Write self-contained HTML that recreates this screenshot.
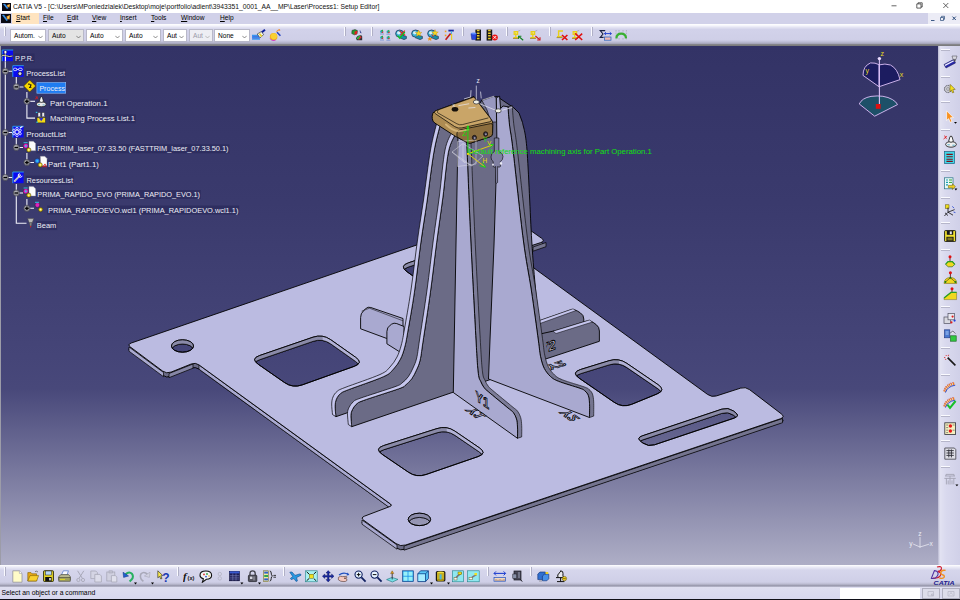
<!DOCTYPE html>
<html lang="en"><head><meta charset="utf-8"><title>CATIA V5 - Setup Editor</title>
<style>
html,body{margin:0;padding:0;}
body{width:960px;height:600px;overflow:hidden;position:relative;background:#9c9ca8;font-family:"Liberation Sans",sans-serif;font-size:6.6px;color:#000;}
.abs{position:absolute;}
.t{position:absolute;white-space:nowrap;line-height:1;transform-origin:0 0;}
#title{position:absolute;left:0;top:0;width:960px;height:13px;background:#fff;}
#menu{position:absolute;left:0;top:13px;width:960px;height:11px;background:#d1d1e9;}
#tb{position:absolute;left:0;top:24px;width:960px;height:22px;background:linear-gradient(#ffffff 0,#f6f6fc 1.5px,#e2e2f2 3.5px,#d2d2ea 5.5px,#cfcfe7 16px,#bcbcd4 18px,#a8a8bc 19.5px,#85858a 20.5px,#7c7c7e 21.5px,#8a8a92 22px);}
#vp{position:absolute;left:1px;top:46px;width:937px;height:519px;background:linear-gradient(#333366 0,#3a3a6d 30%,#454578 60%,#48487a 66%,#aeaec6 100%);overflow:hidden;}
#rtb{position:absolute;left:938px;top:46px;width:22px;height:519px;background:linear-gradient(90deg,#b8b8d0 0,#e2e2f2 2px,#d9d9ee 8px,#d0d0e8 100%);}
#btb{position:absolute;left:0;top:565px;width:960px;height:22px;background:linear-gradient(#ffffff 0,#ececf7 2px,#d6d6ec 5px,#cfcfe7 17px,#bcbcd2 19px,#9c9cb0 20.5px,#b8b8cc 22px);}
#status{position:absolute;left:0;top:587px;width:960px;height:13px;background:linear-gradient(#dedef0 0,#d8d8ee 11px,#d8d8ee 12px,#101018 12px);}
.cb{position:absolute;top:29px;height:13px;background:#fff;box-sizing:border-box;border:0.5px solid #b8b8c8;}
.cb.g{background:#e4e4e4;}
.cb.d{background:#eeeef4;color:#9a9aa8;}
.cb .t{left:3px;top:3.2px;font-size:6.6px;}
.cb svg{position:absolute;right:2px;top:4.5px;}
.sep{position:absolute;width:1px;height:9px;background:#fafaff;box-shadow:1px 0 0 #b0b0c6;}
.hdl{position:absolute;left:941px;width:9px;height:1px;background:#fafaff;box-shadow:0 1px 0 #b6b6ca;}
.ic{position:absolute;}

</style></head>
<body>
<div id="title">
  <svg class="abs" style="left:2px;top:3px" width="9" height="8" viewBox="0 0 9 8"><rect width="9" height="8" fill="#0a0a14"/><path d="M1 1L5 6L6.5 5L3 0.8Z" fill="#3a8ee0"/><path d="M5 2L8 1L7.5 4.5L5.5 4Z" fill="#f0a030"/><path d="M6 2.2L7.3 2L7 3.6Z" fill="#ffe070"/></svg>
  <span class="t" id="ttl" style="left:13px;top:3.6px;font-size:6.74px;color:#111;">CATIA V5 - [C:\Users\MPoniedzialek\Desktop\moje\portfolio\adient\3943351_0001_AA__MP\Laser\Process1: Setup Editor]</span>
  <svg class="abs" style="left:890px;top:0" width="70" height="13" viewBox="0 0 70 13"><path d="M1.5 5.8H6.5" stroke="#222" stroke-width="0.7" fill="none"/><path d="M26.8 3.9H31v4.2h-4.2zM28 3.9V2.8H32.2V7H31" stroke="#222" stroke-width="0.7" fill="none"/><path d="M53.3 3L58.3 8M58.3 3L53.3 8" stroke="#222" stroke-width="0.7" fill="none"/></svg>
</div>
<div id="menu">
  <svg class="abs" style="left:1px;top:1px" width="10" height="9" viewBox="0 0 10 9"><rect width="10" height="9" fill="#0a0a14"/><path d="M1 1L5.5 7L7 6L3 0.8Z" fill="#3a8ee0"/><path d="M5.5 2.5L9 1L8.5 5.5L6 5Z" fill="#f0a030"/><path d="M6.6 2.8L8.2 2.3L7.9 4.4Z" fill="#ffe070"/></svg>
  <div class="abs" style="left:12px;top:0;width:27px;height:11px;background:#ffe4c0;"></div>
  <span class="t m" style="left:16px;top:2.2px;"><u>S</u>tart</span>
  <span class="t m" style="left:43px;top:2.2px;"><u>F</u>ile</span>
  <span class="t m" style="left:67px;top:2.2px;"><u>E</u>dit</span>
  <span class="t m" style="left:92px;top:2.2px;"><u>V</u>iew</span>
  <span class="t m" style="left:120px;top:2.2px;"><u>I</u>nsert</span>
  <span class="t m" style="left:151px;top:2.2px;"><u>T</u>ools</span>
  <span class="t m" style="left:181px;top:2.2px;"><u>W</u>indow</span>
  <span class="t m" style="left:220px;top:2.2px;"><u>H</u>elp</span>
  <div class="abs" style="left:928px;top:0;width:32px;height:11px;background:#ececf6;"></div>
  <svg class="abs" style="left:928px;top:0" width="32" height="11" viewBox="0 0 32 11"><path d="M3 7.5H6.5" stroke="#2a4a7a" stroke-width="0.9"/><path d="M12.5 4.5h3v3h-3zM13.5 4.5V3.3h3v3H15.5" stroke="#2a4a7a" stroke-width="0.7" fill="none"/><path d="M24.5 3.6L27.8 7M27.8 3.6L24.5 7" stroke="#2a4a7a" stroke-width="1"/></svg>
</div>
<div id="tb">
  <div class="sep" style="left:4px;top:2.5px;"></div>
</div>
<div class="cb" style="left:10px;width:36px;"><span class="t">Autom.</span><svg width="5" height="4" viewBox="0 0 5 4"><path d="M0.3 0.8L2.5 3L4.7 0.8" stroke="#444" stroke-width="0.6" fill="none"/></svg></div>
<div class="cb g" style="left:48px;width:36px;"><span class="t">Auto</span><svg width="5" height="4" viewBox="0 0 5 4"><path d="M0.3 0.8L2.5 3L4.7 0.8" stroke="#444" stroke-width="0.6" fill="none"/></svg></div>
<div class="cb" style="left:86px;width:37px;"><span class="t">Auto</span><svg width="5" height="4" viewBox="0 0 5 4"><path d="M0.3 0.8L2.5 3L4.7 0.8" stroke="#444" stroke-width="0.6" fill="none"/></svg></div>
<div class="cb" style="left:125px;width:36px;"><span class="t">Auto</span><svg width="5" height="4" viewBox="0 0 5 4"><path d="M0.3 0.8L2.5 3L4.7 0.8" stroke="#444" stroke-width="0.6" fill="none"/></svg></div>
<div class="cb" style="left:163px;width:24px;"><span class="t">Aut</span><svg width="5" height="4" viewBox="0 0 5 4"><path d="M0.3 0.8L2.5 3L4.7 0.8" stroke="#444" stroke-width="0.6" fill="none"/></svg></div>
<div class="cb d" style="left:189px;width:24px;"><span class="t">Aut</span><svg width="5" height="4" viewBox="0 0 5 4"><path d="M0.3 0.8L2.5 3L4.7 0.8" stroke="#999" stroke-width="0.6" fill="none"/></svg></div>
<div class="cb" style="left:214px;width:36px;"><span class="t">None</span><svg width="5" height="4" viewBox="0 0 5 4"><path d="M0.3 0.8L2.5 3L4.7 0.8" stroke="#444" stroke-width="0.6" fill="none"/></svg></div>
<div class="sep" style="left:344px;top:26.5px;"></div>
<div class="sep" style="left:371px;top:26.5px;"></div>
<div class="sep" style="left:462px;top:26.5px;"></div>
<div class="sep" style="left:506px;top:26.5px;"></div>
<div class="sep" style="left:549px;top:26.5px;"></div>
<div class="sep" style="left:591px;top:26.5px;"></div>
<div id="vp"></div>
<div id="rtb"></div>
<div id="btb">
  <div class="sep" style="left:4px;top:2px;"></div>
  <div class="sep" style="left:177px;top:2px;"></div>
  <div class="sep" style="left:283px;top:2px;"></div>
  <div class="sep" style="left:487px;top:2px;"></div>
  <div class="sep" style="left:530px;top:2px;"></div>
</div>
<div id="status">
  <span class="t" id="stxt" style="left:1.5px;top:2.6px;font-size:6.8px;">Select an object or a command</span>
  <div class="abs" style="left:840px;top:1px;width:80px;height:11px;background:#fff;"></div>
  <div class="abs" style="left:922px;top:1px;width:18px;height:11px;background:#dcdcea;border:0.5px solid #b0b0c0;box-sizing:border-box;"></div>
  <div class="abs" style="left:942px;top:1px;width:18px;height:11px;background:#dcdcea;border:0.5px solid #b0b0c0;box-sizing:border-box;"></div>
  <svg class="abs" style="left:922px;top:1px" width="38" height="11" viewBox="0 0 38 11"><path d="M6 3.5h5.5v4.5H6zM9.5 6h1.5v1.5H9.5z" stroke="#b4b4c4" stroke-width="0.7" fill="none"/><path d="M26 3.5h6v4.5h-6zM27.5 6.5l1.5-2 1.5 2" stroke="#b4b4c4" stroke-width="0.7" fill="none"/></svg>
</div>
<svg class="abs" style="left:1px;top:46px" width="300" height="200" viewBox="1 46 300 200">
<g fill="none" stroke="#f0f0f8" stroke-width="1.1">
<path d="M5.3 60V177.5"/>
<path d="M5.3 71.3H12.5M5.3 132.5H12.5M5.3 177.5H12.5"/>
<path d="M16.3 77V87H23.5"/><path d="M26.9 92V118.1H35"/><path d="M26.9 101.3H35"/>
<path d="M16.3 138V147.5H23"/><path d="M26.9 153V162.5H34"/>
<path d="M16.3 184V223.3H26.5"/><path d="M16.3 193H23"/><path d="M26.9 199V208.3H34"/>
</g>
<circle cx="5.3" cy="71.3" r="3.1" fill="#8e8e98" stroke="#3c3c46" stroke-width="0.6"/>
<circle cx="4.8" cy="70.6" r="1.6" fill="#c4c4cc" opacity="0.6"/>
<path d="M3.5 71.3h3.6" stroke="#000" stroke-width="1.3"/>
<circle cx="16.3" cy="86.9" r="3.1" fill="#8e8e98" stroke="#3c3c46" stroke-width="0.6"/>
<circle cx="15.8" cy="86.2" r="1.6" fill="#c4c4cc" opacity="0.6"/>
<path d="M14.5 86.9h3.6" stroke="#000" stroke-width="1.3"/>
<circle cx="26.9" cy="101.3" r="3.1" fill="#8e8e98" stroke="#3c3c46" stroke-width="0.6"/>
<circle cx="26.4" cy="100.6" r="1.6" fill="#c4c4cc" opacity="0.6"/>
<path d="M25.1 101.3h3.6" stroke="#000" stroke-width="1.3"/>
<path d="M26.9 99.5v3.6" stroke="#000" stroke-width="1.3"/>
<circle cx="5.3" cy="132.5" r="3.1" fill="#8e8e98" stroke="#3c3c46" stroke-width="0.6"/>
<circle cx="4.8" cy="131.8" r="1.6" fill="#c4c4cc" opacity="0.6"/>
<path d="M3.5 132.5h3.6" stroke="#000" stroke-width="1.3"/>
<circle cx="16.3" cy="147.5" r="3.1" fill="#8e8e98" stroke="#3c3c46" stroke-width="0.6"/>
<circle cx="15.8" cy="146.8" r="1.6" fill="#c4c4cc" opacity="0.6"/>
<path d="M14.5 147.5h3.6" stroke="#000" stroke-width="1.3"/>
<circle cx="26.9" cy="162.5" r="3.1" fill="#8e8e98" stroke="#3c3c46" stroke-width="0.6"/>
<circle cx="26.4" cy="161.8" r="1.6" fill="#c4c4cc" opacity="0.6"/>
<path d="M25.1 162.5h3.6" stroke="#000" stroke-width="1.3"/>
<path d="M26.9 160.7v3.6" stroke="#000" stroke-width="1.3"/>
<circle cx="5.3" cy="177.5" r="3.1" fill="#8e8e98" stroke="#3c3c46" stroke-width="0.6"/>
<circle cx="4.8" cy="176.8" r="1.6" fill="#c4c4cc" opacity="0.6"/>
<path d="M3.5 177.5h3.6" stroke="#000" stroke-width="1.3"/>
<circle cx="16.3" cy="193.0" r="3.1" fill="#8e8e98" stroke="#3c3c46" stroke-width="0.6"/>
<circle cx="15.8" cy="192.3" r="1.6" fill="#c4c4cc" opacity="0.6"/>
<path d="M14.5 193.0h3.6" stroke="#000" stroke-width="1.3"/>
<circle cx="26.9" cy="208.3" r="3.1" fill="#8e8e98" stroke="#3c3c46" stroke-width="0.6"/>
<circle cx="26.4" cy="207.6" r="1.6" fill="#c4c4cc" opacity="0.6"/>
<path d="M25.1 208.3h3.6" stroke="#000" stroke-width="1.3"/>
<path d="M26.9 206.5v3.6" stroke="#000" stroke-width="1.3"/>
<rect x="2.0" y="50.0" width="11" height="11.2" fill="#0a0af0"/>
<path d="M2.2 61.2v-11.2h11" fill="none" stroke="#30b0f0" stroke-width="0.8"/>
<circle cx="5.4" cy="52" r="1.5" fill="#fff" stroke="#111" stroke-width="0.5"/><path d="M5.4 53.5V61" stroke="#fff" stroke-width="1.2"/><path d="M1.5 56Q4 54.5 6.5 55.8T12.5 56" fill="none" stroke="#111" stroke-width="1.8"/><path d="M1.5 56Q4 54.5 6.5 55.8T12.5 56" fill="none" stroke="#f4f4d0" stroke-width="0.9"/>
<rect x="12.6" y="65.7" width="11" height="11.2" fill="#0a0af0"/>
<path d="M12.8 76.9v-11.2h11" fill="none" stroke="#30b0f0" stroke-width="0.8"/>
<g fill="none" stroke="#fff" stroke-width="0.8"><rect x="13.6" y="68.2" width="3.2" height="2.4" rx="1"/><rect x="18.6" y="68.2" width="3.6" height="2.4" rx="1"/><path d="M16.8 69.4h1.8"/><circle cx="20" cy="73.6" r="1.9" stroke="#222" fill="#dde"/></g>
<path d="M29.7 80L35.7 86L29.7 92L23.7 86Z" fill="#f4d400" stroke="#3a3200" stroke-width="0.6"/><path d="M28 84.2a1.8 1.8 0 1 1 1 3.4M30 85h1.6M29.6 87.3h1.8" stroke="#111" stroke-width="1" fill="none"/>
<path d="M35 99.3l3-2.6M36 96.2l1.6 3" stroke="#e01818" stroke-width="0.8"/>
<ellipse cx="41.3" cy="104.3" rx="4.8" ry="2.4" fill="#e8e8e8" stroke="#111" stroke-width="0.7"/><path d="M39.2 101.5L40.5 97.2Q41.5 96.2 42.3 97.2L43.6 101.5Q41.4 103.3 39.2 101.5Z" fill="#f2f2f2" stroke="#111" stroke-width="0.7"/><path d="M38 104.6h2M42.6 104.9h2" stroke="#40a0c0" stroke-width="0.8"/>
<rect x="37" y="117.5" width="8.4" height="5.4" fill="#f0d818" stroke="#222" stroke-width="0.5"/><path d="M39 118l2.2 3.2L43.4 118Z" fill="#3030d0"/><rect x="38" y="112.6" width="2.4" height="4.2" fill="#e8e8f0" stroke="#333" stroke-width="0.4"/><rect x="42" y="112.6" width="2.4" height="4.2" fill="#e8e8f0" stroke="#333" stroke-width="0.4"/><rect x="35.8" y="111.8" width="1.6" height="1.2" fill="#30c0e0"/><rect x="36.3" y="121.6" width="1.6" height="1.2" fill="#30c0e0"/>
<rect x="12.6" y="126.3" width="11" height="11.2" fill="#0a0af0"/>
<path d="M12.8 137.5v-11.2h11" fill="none" stroke="#30b0f0" stroke-width="0.8"/>
<g fill="none" stroke="#fff" stroke-width="0.8"><circle cx="17" cy="132" r="2"/><circle cx="17" cy="128.6" r="1.2"/><circle cx="17" cy="135.4" r="1.2"/><circle cx="13.9" cy="130.3" r="1.2"/><circle cx="20.1" cy="130.3" r="1.2"/><circle cx="13.9" cy="133.7" r="1.2"/><circle cx="20.1" cy="133.7" r="1.2"/><path d="M20 128l2.5-1.6" stroke-width="1.2"/></g>
<path d="M29.0 141.3h4.4l2.2 2.2v7.2h-6.6z" fill="#fbfbfb" stroke="#8a8a9a" stroke-width="0.4"/>
<circle cx="25.8" cy="145.9" r="2.6" fill="#e020c0" stroke="#202030" stroke-width="0.5"/><circle cx="25.8" cy="145.9" r="1" fill="#30d0f0"/>
<path d="M23.6 142.7h4" stroke="#30d0f0" stroke-width="0.9"/>
<circle cx="28.8" cy="149.9" r="2.1" fill="#e8d020" stroke="#403800" stroke-width="0.5"/><circle cx="28.8" cy="149.9" r="0.8" fill="#fff8c0"/>
<path d="M40.4 156.3h4.4l2.2 2.2v7.2h-6.6z" fill="#fbfbfb" stroke="#8a8a9a" stroke-width="0.4"/>
<circle cx="37.2" cy="160.9" r="2.6" fill="#2a7af0" stroke="#202030" stroke-width="0.5"/><circle cx="37.2" cy="160.9" r="1" fill="#30d0f0"/>
<circle cx="40.2" cy="164.9" r="2.1" fill="#e8d020" stroke="#403800" stroke-width="0.5"/><circle cx="40.2" cy="164.9" r="0.8" fill="#fff8c0"/>
<path d="M42.6 167.3l2.4-3.4l1.6 3.4M42.8 166.3l3 0.6" stroke="#e01818" stroke-width="0.8" fill="none"/>
<path d="M29.0 186.6h4.4l2.2 2.2v7.2h-6.6z" fill="#fbfbfb" stroke="#8a8a9a" stroke-width="0.4"/>
<circle cx="25.8" cy="191.2" r="2.6" fill="#e020c0" stroke="#202030" stroke-width="0.5"/><circle cx="25.8" cy="191.2" r="1" fill="#30d0f0"/>
<path d="M23.6 188.0h4" stroke="#30d0f0" stroke-width="0.9"/>
<circle cx="28.8" cy="195.2" r="2.1" fill="#e8d020" stroke="#403800" stroke-width="0.5"/><circle cx="28.8" cy="195.2" r="0.8" fill="#fff8c0"/>
<rect x="12.6" y="172.0" width="11" height="11.2" fill="#0a0af0"/>
<path d="M12.8 183.2v-11.2h11" fill="none" stroke="#30b0f0" stroke-width="0.8"/>
<path d="M14.2 181.6L20.6 174.6" stroke="#fff" stroke-width="1.6"/><path d="M14.2 181.6L20.6 174.6" stroke="#222" stroke-width="0.5"/><path d="M19.6 173.4a2 2 0 1 0 2.6 2.4" fill="none" stroke="#fff" stroke-width="1"/>
<circle cx="37.4" cy="205" r="2.4" fill="#e020c0" stroke="#202030" stroke-width="0.5"/><path d="M35 202.3h4" stroke="#30d0f0" stroke-width="0.9"/><circle cx="40.6" cy="209.6" r="2.1" fill="#e8d020" stroke="#403800" stroke-width="0.5"/><circle cx="40.6" cy="209.6" r="0.8" fill="#fff8c0"/>
<path d="M27.6 218.6h6.2l-1.6 4.2h-3z" fill="#b8b8b8" stroke="#444" stroke-width="0.5"/><path d="M29.4 222.8h2.6l-0.6 3.2h-1.4z" fill="#8a8a8a" stroke="#444" stroke-width="0.4"/><path d="M30 226h1.4l-0.7 2z" fill="#e02020"/>
<rect x="14.2" y="53.6" width="20.4" height="9" fill="#2b2b5c" opacity="0.75"/>
<text x="15.00" y="60.70" font-family="Liberation Sans, sans-serif" font-size="7.6" fill="#eeeef6" textLength="18.8" lengthAdjust="spacingAndGlyphs">P.P.R.</text>
<rect x="25.4" y="68.7" width="40.4" height="9" fill="#2b2b5c" opacity="0.75"/>
<text x="26.25" y="75.80" font-family="Liberation Sans, sans-serif" font-size="7.6" fill="#eeeef6" textLength="38.8" lengthAdjust="spacingAndGlyphs">ProcessList</text>
<rect x="36.9" y="82.6" width="28.8" height="10.6" fill="#1f7cf2" stroke="#8cc0ff" stroke-width="0.6"/>
<text x="39.40" y="90.70" font-family="Liberation Sans, sans-serif" font-size="7.6" fill="#eeeef6" textLength="25.6" lengthAdjust="spacingAndGlyphs">Process</text>
<rect x="49.2" y="99.3" width="59.1" height="9" fill="#2b2b5c" opacity="0.75"/>
<text x="50.00" y="106.45" font-family="Liberation Sans, sans-serif" font-size="7.6" fill="#eeeef6" textLength="57.5" lengthAdjust="spacingAndGlyphs">Part Operation.1</text>
<rect x="49.2" y="114.3" width="86.6" height="9" fill="#2b2b5c" opacity="0.75"/>
<text x="50.00" y="121.45" font-family="Liberation Sans, sans-serif" font-size="7.6" fill="#eeeef6" textLength="85.0" lengthAdjust="spacingAndGlyphs">Machining Process List.1</text>
<rect x="25.4" y="130.0" width="41.4" height="9" fill="#2b2b5c" opacity="0.75"/>
<text x="26.25" y="137.10" font-family="Liberation Sans, sans-serif" font-size="7.6" fill="#eeeef6" textLength="39.8" lengthAdjust="spacingAndGlyphs">ProductList</text>
<rect x="36.5" y="144.3" width="192.9" height="9" fill="#2b2b5c" opacity="0.75"/>
<text x="37.25" y="151.45" font-family="Liberation Sans, sans-serif" font-size="7.6" fill="#eeeef6" textLength="191.3" lengthAdjust="spacingAndGlyphs">FASTTRIM_laser_07.33.50 (FASTTRIM_laser_07.33.50.1)</text>
<rect x="47.2" y="160.3" width="52.4" height="9" fill="#2b2b5c" opacity="0.75"/>
<text x="48.00" y="167.45" font-family="Liberation Sans, sans-serif" font-size="7.6" fill="#eeeef6" textLength="50.8" lengthAdjust="spacingAndGlyphs">Part1 (Part1.1)</text>
<rect x="25.7" y="175.6" width="48.1" height="9" fill="#2b2b5c" opacity="0.75"/>
<text x="26.50" y="182.70" font-family="Liberation Sans, sans-serif" font-size="7.6" fill="#eeeef6" textLength="46.5" lengthAdjust="spacingAndGlyphs">ResourcesList</text>
<rect x="36.5" y="190.0" width="164.3" height="9" fill="#2b2b5c" opacity="0.75"/>
<text x="37.25" y="197.10" font-family="Liberation Sans, sans-serif" font-size="7.6" fill="#eeeef6" textLength="162.8" lengthAdjust="spacingAndGlyphs">PRIMA_RAPIDO_EVO (PRIMA_RAPIDO_EVO.1)</text>
<rect x="47.2" y="205.5" width="192.0" height="9" fill="#2b2b5c" opacity="0.75"/>
<text x="48.00" y="212.60" font-family="Liberation Sans, sans-serif" font-size="7.6" fill="#eeeef6" textLength="190.4" lengthAdjust="spacingAndGlyphs">PRIMA_RAPIDOEVO.wcl1 (PRIMA_RAPIDOEVO.wcl1.1)</text>
<rect x="36.0" y="221.1" width="21.1" height="9" fill="#2b2b5c" opacity="0.75"/>
<text x="36.75" y="228.20" font-family="Liberation Sans, sans-serif" font-size="7.6" fill="#eeeef6" textLength="19.5" lengthAdjust="spacingAndGlyphs">Beam</text>
</svg><svg class="abs" style="left:1px;top:46px" width="937" height="519" viewBox="1 46 937 519">
<path d="M130.6 351.4Q127.0 348.7 131.3 347.2L503.2 219.5Q507.0 218.2 510.3 220.5L541.4 242.3Q545.5 245.2 540.7 246.8L514.9 255.3Q512.0 256.2 514.4 258.0L707.7 398.7Q711.7 401.6 716.5 400.1L740.7 392.3Q745.5 390.8 749.5 393.8L781.1 417.9Q785.5 421.2 780.3 423.0L405.7 549.2Q400.5 551.0 396.0 547.8L363.9 524.6Q360.2 522.0 364.4 520.4L390.2 510.6Q392.5 509.7 390.5 508.2L199.0 369.1Q195.4 366.5 191.2 368.2L171.1 376.3Q166.5 378.2 162.5 375.2ZM258.4 368.6Q250.2 362.9 259.7 359.7L313.0 341.4Q322.5 338.2 330.7 343.9L355.5 361.4Q363.7 367.1 354.3 370.5L302.2 389.1Q292.8 392.5 284.6 386.8ZM382.3 458.6Q374.1 452.9 383.6 449.8L437.0 432.8Q446.5 429.7 454.8 435.3L479.2 451.9Q487.5 457.5 478.0 460.8L426.0 478.7Q416.5 482.0 408.3 476.3ZM579.2 382.4Q571.0 376.7 580.6 373.7L609.1 364.9Q618.7 361.9 626.9 367.6L658.0 388.8Q666.2 394.5 656.9 398.2L631.7 408.5Q622.4 412.2 614.2 406.5ZM407.1 276.0Q399.0 270.2 408.5 267.0L461.5 249.4Q471.0 246.2 479.2 251.9L504.8 269.5Q513.0 275.2 503.6 278.5L450.4 296.9Q441.0 300.2 432.9 294.4ZM641.3 446.0Q636.0 442.2 642.2 440.1L721.8 413.4Q728.0 411.3 733.3 415.1L735.0 416.4Q740.3 420.2 734.1 422.3L654.5 449.0Q648.3 451.1 643.0 447.3ZM171.5 350.2a11.0 6.2 0 1 0 22.0 0a11.0 6.2 0 1 0 -22.0 0ZM408.2 523.6a11.2 6.2 0 1 0 22.4 0a11.2 6.2 0 1 0 -22.4 0Z" fill="#6b6b86" fill-rule="evenodd" stroke="#000" stroke-width="0.9" stroke-linejoin="round"/>
<path d="M129.0 347.0L163.5 372.5L163.5 376.7L129.0 351.2Z" fill="#a9a9d0" stroke="#000" stroke-width="0.7" stroke-linejoin="round" />
<path d="M199.0 365.0L391.0 504.5L391.0 508.7L199.0 369.2Z" fill="#a9a9d0" stroke="#000" stroke-width="0.7" stroke-linejoin="round" />
<path d="M362.0 520.0L397.0 545.0L397.0 549.2L362.0 524.2Z" fill="#a9a9d0" stroke="#000" stroke-width="0.7" stroke-linejoin="round" />
<path d="M169.0 373.5L193.0 364.0L193.0 368.2L169.0 377.7Z" fill="#8686a6" stroke="#000" stroke-width="0.7" stroke-linejoin="round" />
<path d="M404.0 546.0L782.5 418.5L782.5 422.7L404.0 550.2Z" fill="#74748f" stroke="#000" stroke-width="0.7" stroke-linejoin="round" />
<path d="M546.0 242.5L533.0 247.0L533.0 251.2L546.0 246.7Z" fill="#74748f" stroke="#000" stroke-width="0.7" stroke-linejoin="round" />
<defs>
<mask id="mk0" maskUnits="userSpaceOnUse" x="0" y="0" width="960" height="600"><path d="M258.4 364.4Q250.2 358.7 259.7 355.5L313.0 337.2Q322.5 334.0 330.7 339.7L355.5 357.2Q363.7 362.9 354.3 366.3L302.2 384.9Q292.8 388.3 284.6 382.6Z" fill="#fff"/><path d="M258.4 368.6Q250.2 362.9 259.7 359.7L313.0 341.4Q322.5 338.2 330.7 343.9L355.5 361.4Q363.7 367.1 354.3 370.5L302.2 389.1Q292.8 392.5 284.6 386.8Z" fill="#000"/></mask>
<clipPath id="cc0"><path d="M258.4 364.4Q250.2 358.7 259.7 355.5L313.0 337.2Q322.5 334.0 330.7 339.7L355.5 357.2Q363.7 362.9 354.3 366.3L302.2 384.9Q292.8 388.3 284.6 382.6Z"/></clipPath>
<mask id="mk1" maskUnits="userSpaceOnUse" x="0" y="0" width="960" height="600"><path d="M382.3 454.4Q374.1 448.7 383.6 445.6L437.0 428.6Q446.5 425.5 454.8 431.1L479.2 447.7Q487.5 453.3 478.0 456.6L426.0 474.5Q416.5 477.8 408.3 472.1Z" fill="#fff"/><path d="M382.3 458.6Q374.1 452.9 383.6 449.8L437.0 432.8Q446.5 429.7 454.8 435.3L479.2 451.9Q487.5 457.5 478.0 460.8L426.0 478.7Q416.5 482.0 408.3 476.3Z" fill="#000"/></mask>
<clipPath id="cc1"><path d="M382.3 454.4Q374.1 448.7 383.6 445.6L437.0 428.6Q446.5 425.5 454.8 431.1L479.2 447.7Q487.5 453.3 478.0 456.6L426.0 474.5Q416.5 477.8 408.3 472.1Z"/></clipPath>
<mask id="mk2" maskUnits="userSpaceOnUse" x="0" y="0" width="960" height="600"><path d="M579.2 378.2Q571.0 372.5 580.6 369.5L609.1 360.7Q618.7 357.7 626.9 363.4L658.0 384.6Q666.2 390.3 656.9 394.0L631.7 404.3Q622.4 408.0 614.2 402.3Z" fill="#fff"/><path d="M579.2 382.4Q571.0 376.7 580.6 373.7L609.1 364.9Q618.7 361.9 626.9 367.6L658.0 388.8Q666.2 394.5 656.9 398.2L631.7 408.5Q622.4 412.2 614.2 406.5Z" fill="#000"/></mask>
<clipPath id="cc2"><path d="M579.2 378.2Q571.0 372.5 580.6 369.5L609.1 360.7Q618.7 357.7 626.9 363.4L658.0 384.6Q666.2 390.3 656.9 394.0L631.7 404.3Q622.4 408.0 614.2 402.3Z"/></clipPath>
<mask id="mk3" maskUnits="userSpaceOnUse" x="0" y="0" width="960" height="600"><path d="M407.1 271.8Q399.0 266.0 408.5 262.8L461.5 245.2Q471.0 242.0 479.2 247.7L504.8 265.3Q513.0 271.0 503.6 274.3L450.4 292.7Q441.0 296.0 432.9 290.2Z" fill="#fff"/><path d="M407.1 276.0Q399.0 270.2 408.5 267.0L461.5 249.4Q471.0 246.2 479.2 251.9L504.8 269.5Q513.0 275.2 503.6 278.5L450.4 296.9Q441.0 300.2 432.9 294.4Z" fill="#000"/></mask>
<clipPath id="cc3"><path d="M407.1 271.8Q399.0 266.0 408.5 262.8L461.5 245.2Q471.0 242.0 479.2 247.7L504.8 265.3Q513.0 271.0 503.6 274.3L450.4 292.7Q441.0 296.0 432.9 290.2Z"/></clipPath>
<mask id="mk4" maskUnits="userSpaceOnUse" x="0" y="0" width="960" height="600"><path d="M641.3 441.8Q636.0 438.0 642.2 435.9L721.8 409.2Q728.0 407.1 733.3 410.9L735.0 412.2Q740.3 416.0 734.1 418.1L654.5 444.8Q648.3 446.9 643.0 443.1Z" fill="#fff"/><path d="M641.3 446.0Q636.0 442.2 642.2 440.1L721.8 413.4Q728.0 411.3 733.3 415.1L735.0 416.4Q740.3 420.2 734.1 422.3L654.5 449.0Q648.3 451.1 643.0 447.3Z" fill="#000"/></mask>
<clipPath id="cc4"><path d="M641.3 441.8Q636.0 438.0 642.2 435.9L721.8 409.2Q728.0 407.1 733.3 410.9L735.0 412.2Q740.3 416.0 734.1 418.1L654.5 444.8Q648.3 446.9 643.0 443.1Z"/></clipPath>
<mask id="mk5" maskUnits="userSpaceOnUse" x="0" y="0" width="960" height="600"><path d="M171.5 346.0a11.0 6.2 0 1 0 22.0 0a11.0 6.2 0 1 0 -22.0 0Z" fill="#fff"/><path d="M171.5 350.2a11.0 6.2 0 1 0 22.0 0a11.0 6.2 0 1 0 -22.0 0Z" fill="#000"/></mask>
<clipPath id="cc5"><path d="M171.5 346.0a11.0 6.2 0 1 0 22.0 0a11.0 6.2 0 1 0 -22.0 0Z"/></clipPath>
<mask id="mk6" maskUnits="userSpaceOnUse" x="0" y="0" width="960" height="600"><path d="M408.2 519.4a11.2 6.2 0 1 0 22.4 0a11.2 6.2 0 1 0 -22.4 0Z" fill="#fff"/><path d="M408.2 523.6a11.2 6.2 0 1 0 22.4 0a11.2 6.2 0 1 0 -22.4 0Z" fill="#000"/></mask>
<clipPath id="cc6"><path d="M408.2 519.4a11.2 6.2 0 1 0 22.4 0a11.2 6.2 0 1 0 -22.4 0Z"/></clipPath>
</defs>
<path d="M130.6 347.2Q127.0 344.5 131.3 343.0L503.2 215.3Q507.0 214.0 510.3 216.3L541.4 238.1Q545.5 241.0 540.7 242.6L514.9 251.1Q512.0 252.0 514.4 253.8L707.7 394.5Q711.7 397.4 716.5 395.9L740.7 388.1Q745.5 386.6 749.5 389.6L781.1 413.7Q785.5 417.0 780.3 418.8L405.7 545.0Q400.5 546.8 396.0 543.6L363.9 520.4Q360.2 517.8 364.4 516.2L390.2 506.4Q392.5 505.5 390.5 504.0L199.0 364.9Q195.4 362.3 191.2 364.0L171.1 372.1Q166.5 374.0 162.5 371.0ZM258.4 364.4Q250.2 358.7 259.7 355.5L313.0 337.2Q322.5 334.0 330.7 339.7L355.5 357.2Q363.7 362.9 354.3 366.3L302.2 384.9Q292.8 388.3 284.6 382.6ZM382.3 454.4Q374.1 448.7 383.6 445.6L437.0 428.6Q446.5 425.5 454.8 431.1L479.2 447.7Q487.5 453.3 478.0 456.6L426.0 474.5Q416.5 477.8 408.3 472.1ZM579.2 378.2Q571.0 372.5 580.6 369.5L609.1 360.7Q618.7 357.7 626.9 363.4L658.0 384.6Q666.2 390.3 656.9 394.0L631.7 404.3Q622.4 408.0 614.2 402.3ZM407.1 271.8Q399.0 266.0 408.5 262.8L461.5 245.2Q471.0 242.0 479.2 247.7L504.8 265.3Q513.0 271.0 503.6 274.3L450.4 292.7Q441.0 296.0 432.9 290.2ZM641.3 441.8Q636.0 438.0 642.2 435.9L721.8 409.2Q728.0 407.1 733.3 410.9L735.0 412.2Q740.3 416.0 734.1 418.1L654.5 444.8Q648.3 446.9 643.0 443.1ZM171.5 346.0a11.0 6.2 0 1 0 22.0 0a11.0 6.2 0 1 0 -22.0 0ZM408.2 519.4a11.2 6.2 0 1 0 22.4 0a11.2 6.2 0 1 0 -22.4 0Z" fill="#bbbbe1" fill-rule="evenodd" stroke="#000" stroke-width="0.9" stroke-linejoin="round"/>
<g mask="url(#mk0)"><rect x="100" y="200" width="222.5" height="400" fill="#8a8aa8"/><rect x="322.5" y="200" width="800" height="400" fill="#b2b2d6"/></g>
<path d="M258.4 368.6Q250.2 362.9 259.7 359.7L313.0 341.4Q322.5 338.2 330.7 343.9L355.5 361.4Q363.7 367.1 354.3 370.5L302.2 389.1Q292.8 392.5 284.6 386.8Z" fill="none" stroke="#000" stroke-width="0.7" clip-path="url(#cc0)"/>
<g mask="url(#mk1)"><rect x="100" y="200" width="346.5" height="400" fill="#8a8aa8"/><rect x="446.5" y="200" width="800" height="400" fill="#b2b2d6"/></g>
<path d="M382.3 458.6Q374.1 452.9 383.6 449.8L437.0 432.8Q446.5 429.7 454.8 435.3L479.2 451.9Q487.5 457.5 478.0 460.8L426.0 478.7Q416.5 482.0 408.3 476.3Z" fill="none" stroke="#000" stroke-width="0.7" clip-path="url(#cc1)"/>
<g mask="url(#mk2)"><rect x="100" y="200" width="518.7" height="400" fill="#8a8aa8"/><rect x="618.7" y="200" width="800" height="400" fill="#b2b2d6"/></g>
<path d="M579.2 382.4Q571.0 376.7 580.6 373.7L609.1 364.9Q618.7 361.9 626.9 367.6L658.0 388.8Q666.2 394.5 656.9 398.2L631.7 408.5Q622.4 412.2 614.2 406.5Z" fill="none" stroke="#000" stroke-width="0.7" clip-path="url(#cc2)"/>
<g mask="url(#mk3)"><rect x="100" y="200" width="371.0" height="400" fill="#8a8aa8"/><rect x="471.0" y="200" width="800" height="400" fill="#b2b2d6"/></g>
<path d="M407.1 276.0Q399.0 270.2 408.5 267.0L461.5 249.4Q471.0 246.2 479.2 251.9L504.8 269.5Q513.0 275.2 503.6 278.5L450.4 296.9Q441.0 300.2 432.9 294.4Z" fill="none" stroke="#000" stroke-width="0.7" clip-path="url(#cc3)"/>
<g mask="url(#mk4)"><rect x="100" y="200" width="800.0" height="400" fill="#8a8aa8"/><rect x="900.0" y="200" width="800" height="400" fill="#b2b2d6"/></g>
<path d="M641.3 446.0Q636.0 442.2 642.2 440.1L721.8 413.4Q728.0 411.3 733.3 415.1L735.0 416.4Q740.3 420.2 734.1 422.3L654.5 449.0Q648.3 451.1 643.0 447.3Z" fill="none" stroke="#000" stroke-width="0.7" clip-path="url(#cc4)"/>
<g mask="url(#mk5)"><rect x="100" y="200" width="800.0" height="400" fill="#8a8aa8"/><rect x="900.0" y="200" width="800" height="400" fill="#b2b2d6"/></g>
<path d="M171.5 350.2a11.0 6.2 0 1 0 22.0 0a11.0 6.2 0 1 0 -22.0 0Z" fill="none" stroke="#000" stroke-width="0.7" clip-path="url(#cc5)"/>
<g mask="url(#mk6)"><rect x="100" y="200" width="800.0" height="400" fill="#8a8aa8"/><rect x="900.0" y="200" width="800" height="400" fill="#b2b2d6"/></g>
<path d="M408.2 523.6a11.2 6.2 0 1 0 22.4 0a11.2 6.2 0 1 0 -22.4 0Z" fill="none" stroke="#000" stroke-width="0.7" clip-path="url(#cc6)"/>
<path d="M258.4 364.4Q250.2 358.7 259.7 355.5L313.0 337.2Q322.5 334.0 330.7 339.7L355.5 357.2Q363.7 362.9 354.3 366.3L302.2 384.9Q292.8 388.3 284.6 382.6Z" fill="none" stroke="#000" stroke-width="0.9"/>
<path d="M382.3 454.4Q374.1 448.7 383.6 445.6L437.0 428.6Q446.5 425.5 454.8 431.1L479.2 447.7Q487.5 453.3 478.0 456.6L426.0 474.5Q416.5 477.8 408.3 472.1Z" fill="none" stroke="#000" stroke-width="0.9"/>
<path d="M579.2 378.2Q571.0 372.5 580.6 369.5L609.1 360.7Q618.7 357.7 626.9 363.4L658.0 384.6Q666.2 390.3 656.9 394.0L631.7 404.3Q622.4 408.0 614.2 402.3Z" fill="none" stroke="#000" stroke-width="0.9"/>
<path d="M407.1 271.8Q399.0 266.0 408.5 262.8L461.5 245.2Q471.0 242.0 479.2 247.7L504.8 265.3Q513.0 271.0 503.6 274.3L450.4 292.7Q441.0 296.0 432.9 290.2Z" fill="none" stroke="#000" stroke-width="0.9"/>
<path d="M641.3 441.8Q636.0 438.0 642.2 435.9L721.8 409.2Q728.0 407.1 733.3 410.9L735.0 412.2Q740.3 416.0 734.1 418.1L654.5 444.8Q648.3 446.9 643.0 443.1Z" fill="none" stroke="#000" stroke-width="0.9"/>
<path d="M171.5 346.0a11.0 6.2 0 1 0 22.0 0a11.0 6.2 0 1 0 -22.0 0Z" fill="none" stroke="#000" stroke-width="0.9"/>
<path d="M408.2 519.4a11.2 6.2 0 1 0 22.4 0a11.2 6.2 0 1 0 -22.4 0Z" fill="none" stroke="#000" stroke-width="0.9"/>
<path d="M360.6 328.8L360.6 317.5Q360.6 313.5 363.5 310.8L365.8 308.6Q368.0 306.5 370.8 307.5L403.0 318.5L403.0 340.0L386.3 338.3Z" fill="#a9a9d0" stroke="#000" stroke-width="0.9" stroke-linejoin="round" />
<path d="M362.0 311.0L369.5 308.2L402.5 320.6" fill="none" stroke="#000" stroke-width="0.5" stroke-linejoin="round" stroke-linecap="round"/>
<path d="M386.9 343.8L386.9 331.5Q386.9 327.5 390.2 325.2L391.5 324.2Q394.0 322.5 396.8 323.6L404.0 326.5L404.0 352.0L398.8 351.3Z" fill="#a9a9d0" stroke="#000" stroke-width="0.9" stroke-linejoin="round" />
<path d="M536.0 322.0L570.0 310.1Q573.8 308.8 577.2 310.9L580.4 312.9Q583.8 315.0 583.8 319.0L583.8 326.0L540.0 345.0Z" fill="#6b6b86" stroke="#000" stroke-width="0.9" stroke-linejoin="round" />
<path d="M538.0 321.0L573.0 308.8L576.0 310.5L540.0 323.5Z" fill="#c6c6ee" stroke="#000" stroke-width="0.5" stroke-linejoin="round" />
<path d="M540.0 334.0L556.0 330.5L586.2 321.2Q590.0 320.0 593.2 322.4L596.2 324.6Q599.4 327.0 599.4 331.0L599.4 341.3L545.0 359.2L538.0 350.0Z" fill="#6b6b86" stroke="#000" stroke-width="0.9" stroke-linejoin="round" />
<path d="M553.0 331.2L589.5 320.0L592.5 322.0L556.0 333.5Z" fill="#c6c6ee" stroke="#000" stroke-width="0.5" stroke-linejoin="round" />
<path d="M440.4 124.2C439.3 128.9 436.1 139.2 433.9 152.2C431.6 165.2 429.1 187.2 426.9 202.2C424.7 217.2 423.0 227.2 420.9 242.2C418.8 257.2 416.6 277.2 414.4 292.2C412.2 307.2 409.3 323.0 407.7 332.2C406.1 341.4 405.9 342.7 404.7 347.2C403.5 351.7 402.3 355.5 400.4 359.2C398.5 362.9 396.2 366.3 393.4 369.2C390.6 372.1 390.9 373.3 383.4 376.7C375.9 380.1 355.6 386.9 348.4 389.7C341.2 392.5 342.4 392.1 340.4 393.7C338.4 395.3 337.3 397.1 336.4 399.2C335.5 401.3 335.2 403.3 335.1 406.2C335.0 409.1 335.8 414.9 335.9 416.7L440 381L455 130Z" fill="#6b6b86" stroke="#000" stroke-width="0.9" stroke-linejoin="round"/>
<path d="M437.0 122.0C435.9 126.7 432.8 137.0 430.5 150.0C428.2 163.0 425.7 185.0 423.5 200.0C421.3 215.0 419.6 225.0 417.5 240.0C415.4 255.0 413.2 275.0 411.0 290.0C408.8 305.0 405.9 320.8 404.3 330.0C402.7 339.2 402.5 340.5 401.3 345.0C400.1 349.5 398.9 353.3 397.0 357.0C395.1 360.7 392.8 364.1 390.0 367.0C387.2 369.9 387.5 371.1 380.0 374.5C372.5 377.9 352.2 384.7 345.0 387.5C337.8 390.3 339.0 389.9 337.0 391.5C335.0 393.1 333.9 394.9 333.0 397.0C332.1 399.1 331.8 401.1 331.7 404.0C331.6 406.9 332.4 412.8 332.5 414.5L335.9 416.7C335.8 414.9 335.0 409.1 335.1 406.2C335.2 403.3 335.5 401.3 336.4 399.2C337.3 397.1 338.4 395.3 340.4 393.7C342.4 392.1 341.2 392.5 348.4 389.7C355.6 386.9 375.9 380.1 383.4 376.7C390.9 373.3 390.6 372.1 393.4 369.2C396.2 366.3 398.5 362.9 400.4 359.2C402.3 355.5 403.5 351.7 404.7 347.2C405.9 342.7 406.1 341.4 407.7 332.2C409.3 323.0 412.2 307.2 414.4 292.2C416.6 277.2 418.8 257.2 420.9 242.2C423.0 227.2 424.7 217.2 426.9 202.2C429.1 187.2 431.6 165.2 433.9 152.2C436.1 139.2 439.3 128.9 440.4 124.2Z" fill="#c6c6ee" stroke="#000" stroke-width="0.7" stroke-linejoin="round"/>
<path d="M455.4 134.2C454.2 137.2 450.5 141.7 448.4 152.2C446.3 162.7 444.8 182.2 442.9 197.2C440.9 212.2 438.8 226.4 436.7 242.2C434.6 258.0 432.7 275.5 430.4 292.2C428.1 308.9 424.6 330.9 422.9 342.2C421.2 353.5 421.2 355.5 420.1 360.2C419.0 364.9 417.8 367.1 416.4 370.2C415.0 373.3 413.5 376.4 411.7 378.9C409.9 381.4 407.6 383.5 405.4 385.2C403.2 386.9 405.4 386.3 398.4 388.9C391.4 391.4 370.4 397.9 363.4 400.5C356.4 403.1 358.2 402.7 356.4 404.2C354.6 405.7 353.3 407.8 352.4 409.7C351.5 411.6 351.0 412.7 350.9 415.5C350.8 418.3 351.6 424.8 351.7 426.7L489 380L541 362L541.0 345.0C540.7 340.8 539.9 329.2 539.0 320.0C538.1 310.8 536.8 303.3 535.6 290.0C534.4 276.7 533.1 263.3 531.7 240.0C530.3 216.7 528.5 169.6 527.0 150.0C525.5 130.4 523.2 127.1 522.5 122.5L519 113L514 108L497 96.5L482 100L470 118Z" fill="#6b6b86" stroke="#000" stroke-width="0.9" stroke-linejoin="round"/>
<path d="M452.0 132.0C450.8 135.0 447.1 139.5 445.0 150.0C442.9 160.5 441.4 180.0 439.5 195.0C437.6 210.0 435.4 224.2 433.3 240.0C431.2 255.8 429.3 273.3 427.0 290.0C424.7 306.7 421.2 328.7 419.5 340.0C417.8 351.3 417.8 353.3 416.7 358.0C415.6 362.7 414.4 364.9 413.0 368.0C411.6 371.1 410.1 374.2 408.3 376.7C406.5 379.2 404.2 381.3 402.0 383.0C399.8 384.7 402.0 384.1 395.0 386.7C388.0 389.2 367.0 395.8 360.0 398.3C353.0 400.9 354.8 400.5 353.0 402.0C351.2 403.5 349.9 405.6 349.0 407.5C348.1 409.4 347.6 410.5 347.5 413.3C347.4 416.1 348.2 422.6 348.3 424.5L351.7 426.7C351.6 424.8 350.8 418.3 350.9 415.5C351.0 412.7 351.5 411.6 352.4 409.7C353.3 407.8 354.6 405.7 356.4 404.2C358.2 402.7 356.4 403.1 363.4 400.5C370.4 397.9 391.4 391.4 398.4 388.9C405.4 386.3 403.2 386.9 405.4 385.2C407.6 383.5 409.9 381.4 411.7 378.9C413.5 376.4 415.0 373.3 416.4 370.2C417.8 367.1 419.0 364.9 420.1 360.2C421.2 355.5 421.2 353.5 422.9 342.2C424.6 330.9 428.1 308.9 430.4 292.2C432.7 275.5 434.6 258.0 436.7 242.2C438.8 226.4 440.9 212.2 442.9 197.2C444.8 182.2 446.3 162.7 448.4 152.2C450.5 141.7 454.2 137.2 455.4 134.2Z" fill="#c6c6ee" stroke="#000" stroke-width="0.7" stroke-linejoin="round"/>
<path d="M482.0 100.5L494.0 96.3L496.3 97.8L496.5 122.0L491.0 122.0L487.0 110.0Z" fill="#9898c0" stroke="#000" stroke-width="0.6" stroke-linejoin="round" />
<path d="M470.2 136.6C470.4 138.6 470.4 131.6 471.2 148.6C472.0 165.6 473.5 206.9 475.0 238.6C476.5 270.3 478.9 316.4 480.2 338.6C481.4 360.8 481.7 365.0 482.5 371.9C483.3 378.9 484.1 377.9 485.0 380.3C485.9 382.7 486.9 384.4 488.2 386.1C489.4 387.8 488.5 386.9 492.5 390.3C496.5 393.7 508.0 403.1 512.2 406.6C516.4 410.1 516.1 409.3 517.5 411.1C518.9 412.9 520.0 415.2 520.7 417.6C521.4 420.0 521.5 422.4 521.7 425.6C521.9 428.8 521.7 435.0 521.7 436.9L517.5 438.3C517.5 436.4 517.7 430.2 517.5 427.0C517.3 423.8 517.2 421.4 516.5 419.0C515.8 416.6 514.7 414.3 513.3 412.5C511.9 410.7 512.2 411.5 508.0 408.0C503.8 404.5 492.3 395.1 488.3 391.7C484.3 388.3 485.2 389.2 484.0 387.5C482.8 385.8 481.8 384.1 480.8 381.7C479.9 379.3 479.1 380.2 478.3 373.3C477.5 366.4 477.2 362.2 476.0 340.0C474.8 317.8 472.3 271.7 470.8 240.0C469.3 208.3 467.8 167.0 467.0 150.0C466.2 133.0 466.2 140.0 466.0 138.0Z" fill="#7c7c98" stroke="#000" stroke-width="0.6" stroke-linejoin="round"/>
<path d="M458 135L453.3 392.5L517.5 438.3L517.5 438.3C517.5 436.4 517.7 430.2 517.5 427.0C517.3 423.8 517.2 421.4 516.5 419.0C515.8 416.6 514.7 414.3 513.3 412.5C511.9 410.7 512.2 411.5 508.0 408.0C503.8 404.5 492.3 395.1 488.3 391.7C484.3 388.3 485.2 389.2 484.0 387.5C482.8 385.8 481.8 384.1 480.8 381.7C479.9 379.3 479.1 380.2 478.3 373.3C477.5 366.4 477.2 362.2 476.0 340.0C474.8 317.8 472.3 271.7 470.8 240.0C469.3 208.3 467.8 167.0 467.0 150.0C466.2 133.0 466.2 140.0 466.0 138.0Z" fill="#a9a9d0" stroke="#000" stroke-width="0.9" stroke-linejoin="round"/>
<path d="M512.2 105.4C512.5 108.4 512.9 116.4 513.7 123.6C514.5 130.8 514.9 129.4 517.2 148.6C519.5 167.8 524.5 215.3 527.5 238.6C530.5 261.9 533.0 271.9 535.5 288.6C538.0 305.3 541.0 327.5 542.5 338.6C544.0 349.7 543.8 350.6 544.8 355.3C545.8 360.0 546.8 363.6 548.4 366.9C550.1 370.2 552.3 372.9 554.7 375.1C557.1 377.3 557.8 377.9 562.7 379.9C567.6 381.9 579.8 385.3 584.2 386.9C588.6 388.5 587.8 388.4 589.2 389.6C590.6 390.8 591.8 392.1 592.5 394.1C593.2 396.2 593.5 398.2 593.7 401.9C593.9 405.6 593.7 413.7 593.7 416.1L589.5 417.5C589.5 415.1 589.7 407.0 589.5 403.3C589.3 399.6 589.0 397.6 588.3 395.5C587.5 393.4 586.4 392.2 585.0 391.0C583.6 389.8 584.4 389.9 580.0 388.3C575.6 386.7 563.4 383.3 558.5 381.3C553.6 379.3 552.9 378.7 550.5 376.5C548.1 374.3 545.9 371.6 544.2 368.3C542.6 365.0 541.6 361.4 540.6 356.7C539.6 352.0 539.8 351.1 538.3 340.0C536.8 328.9 533.8 306.7 531.3 290.0C528.8 273.3 526.3 263.3 523.3 240.0C520.2 216.7 515.3 169.2 513.0 150.0C510.7 130.8 510.3 132.2 509.5 125.0C508.7 117.8 508.2 109.8 508.0 106.8Z" fill="#74748f" stroke="#000" stroke-width="0.6" stroke-linejoin="round"/>
<path d="M496.3 97.8L497 150L494 245L490 340L488.5 379L589.5 417.5L589.5 417.5C589.5 415.1 589.7 407.0 589.5 403.3C589.3 399.6 589.0 397.6 588.3 395.5C587.5 393.4 586.4 392.2 585.0 391.0C583.6 389.8 584.4 389.9 580.0 388.3C575.6 386.7 563.4 383.3 558.5 381.3C553.6 379.3 552.9 378.7 550.5 376.5C548.1 374.3 545.9 371.6 544.2 368.3C542.6 365.0 541.6 361.4 540.6 356.7C539.6 352.0 539.8 351.1 538.3 340.0C536.8 328.9 533.8 306.7 531.3 290.0C528.8 273.3 526.3 263.3 523.3 240.0C520.2 216.7 515.3 169.2 513.0 150.0C510.7 130.8 510.3 132.2 509.5 125.0C508.7 117.8 508.2 109.8 508.0 106.8L503 106L500.6 108.6L499.6 96.2Z" fill="#a9a9d0" stroke="#000" stroke-width="0.9" stroke-linejoin="round"/>
<path d="M432.2 116.2Q432.0 112.2 435.7 110.8L474.0 96.5L491.6 119.9Q492.8 121.5 492.8 123.5L492.6 133.5Q492.5 136.0 490.1 136.8L470.9 143.0Q469.0 143.6 467.2 142.7L458.5 138.0Q455.8 136.6 453.3 135.0L434.9 123.1Q432.4 121.5 432.3 118.5Z" fill="#ad8b52" stroke="#000" stroke-width="0.9" stroke-linejoin="round" />
<path d="M457.3 132.2Q457.8 130.3 459.8 129.9L490.6 123.6Q492.6 123.2 492.6 125.2L492.5 133.5Q492.5 136.0 490.1 136.8L470.9 143.0Q469.0 143.6 467.2 142.6L458.8 138.0Q456.2 136.6 456.9 133.7Z" fill="#8c6e3e" stroke="#000" stroke-width="0.7" stroke-linejoin="round" />
<path d="M446 124.5Q452 130.5 458.5 131.2Q463 131 468 129.6" fill="none" stroke="#dcbc80" stroke-width="2" stroke-linecap="round" opacity="0.8"/>
<path d="M435.9 114.0Q432.6 111.8 436.4 110.5L474.0 97.0L490.8 118.8Q492.6 121.2 489.7 121.8L461.9 127.9Q458.0 128.8 454.7 126.6Z" fill="#c9a568" stroke="#000" stroke-width="0.7" stroke-linejoin="round" />
<path d="M438.0 110.5L437.5 111.5Q437.0 112.5 438.0 113.0L456.9 123.8Q459.5 125.3 462.4 124.6L488.0 118.0" fill="none" stroke="#000" stroke-width="0.6" stroke-linejoin="round" stroke-linecap="round"/>
<ellipse cx="455" cy="109.3" rx="3.3" ry="2.3" fill="#15100a"/>
<ellipse cx="474.4" cy="137.6" rx="2.1" ry="2.3" fill="#3a3140" stroke="#000" stroke-width="0.6"/>
<ellipse cx="485.6" cy="134" rx="2.1" ry="2.3" fill="#3a3140" stroke="#000" stroke-width="0.6"/>
<ellipse cx="474.7" cy="137.9" rx="0.9" ry="1" fill="#9a9ab0"/>
<ellipse cx="485.9" cy="134.3" rx="0.9" ry="1" fill="#9a9ab0"/>
<g fill="none" stroke="#e6e6f2" stroke-width="0.7" stroke-linecap="round">
<path d="M476.3 86V100.5"/><path d="M471 90.6L470.6 97L464.4 98.8"/><path d="M480.6 92L481.2 98"/>
<path d="M458.8 105.6L468.8 103.8"/><path d="M468.8 108L475 107.5"/><path d="M480 103.8L495 110"/><path d="M482.5 100L493.8 96.3"/><path d="M501 110.5L512 107.5"/>
</g>
<ellipse cx="476.3" cy="102" rx="3" ry="2" fill="#f0f0e6" stroke="#22222c" stroke-width="0.7"/>
<ellipse cx="498.2" cy="110.8" rx="3" ry="2" fill="#f0f0e6" stroke="#22222c" stroke-width="0.7"/>
<text x="476.6" y="83.2" font-family="Liberation Sans, sans-serif" font-size="6.5" fill="#e6e6f2">z</text>
<text x="452.5" y="106.6" font-family="Liberation Sans, sans-serif" font-size="5.5" fill="#e6e6f2">x</text>
<path d="M494.3 138V151.5Q491 153 491 157Q491 160.5 493.2 161.5V166.5Q494.6 168 495.6 166.5V182.5Q496.6 184 497.6 182.5V166.5Q499 168 500.4 166.5V161.5Q503 160 503 156.5Q503 153 498.9 151.5V138Z" fill="#8080a2" stroke="#000" stroke-width="0.6" stroke-linejoin="round"/>
<ellipse cx="493" cy="164.6" rx="1" ry="1.2" fill="#e8e8f4"/><ellipse cx="501" cy="163.4" rx="1.2" ry="1.3" fill="#e8e8f4"/>
<g fill="none" stroke="#dcdce8" stroke-width="0.6" opacity="0.85">
<path d="M452 152L463 143.5L483 156L472 166Z"/><path d="M457.5 141.5L476 140V164L457.5 166.5Z"/><path d="M463 143.5V161L472 166"/><path d="M452 152L465 163"/>
</g>
<g fill="none" stroke-linecap="round">
<path d="M467.9 153.8V126" stroke="#10e010" stroke-width="0.9"/><path d="M466.6 130L467.9 125.8L469.2 130" stroke="#10e010" stroke-width="0.8"/>
<path d="M467.9 153.8L492.5 145" stroke="#e8d800" stroke-width="0.9"/><path d="M488.5 144.5L493.3 144.6L490 148" stroke="#10e010" stroke-width="0.9"/>
<path d="M467.9 153.8L484.5 166.5" stroke="#e8d800" stroke-width="0.9"/><path d="M480 165.8L485.5 167.3L482.6 162.6" stroke="#10e010" stroke-width="0.9"/>
</g>
<rect x="467" y="153" width="1.8" height="1.8" fill="#e8d800"/>
<text x="462.2" y="135.6" font-family="Liberation Sans, sans-serif" font-size="7" fill="#10e010">Z</text>
<text x="483" y="141.5" font-family="Liberation Sans, sans-serif" font-size="6.5" fill="#10e010">Y</text>
<text x="487.2" y="145.2" font-family="Liberation Sans, sans-serif" font-size="6" fill="#e8d800">V</text>
<text x="482.6" y="163" font-family="Liberation Sans, sans-serif" font-size="6.5" fill="#e8d800">H</text>
<text id="gtxt" x="468.3" y="154.2" font-family="Liberation Sans, sans-serif" font-size="7.4" fill="#10e010" textLength="183.5" lengthAdjust="spacingAndGlyphs">Default reference machining axis for Part Operation.1</text>
<g stroke-linecap="round" stroke-linejoin="round" stroke="#dcc0f8" stroke-width="0.9">
<path d="M859.4 103.6Q862 98 871 96.4Q884 94.6 892.5 99.6Q896.5 102 897.5 104.6L875 116Z" fill="#1d5068"/>
<path d="M863 75Q863 66 870.6 62.9Q875 62.5 879.4 64.8V86.6Z" fill="#1c1c60"/>
<path d="M879.4 64.8Q885 63.2 890.5 65Q897.5 68.5 900 79.6L879.4 86.6Z" fill="#1c1c60"/>
<path d="M879.4 60V105" fill="none" stroke-width="1.1"/>
</g>
<circle cx="879.4" cy="58.6" r="1.7" fill="#ecdcff"/>
<rect x="875.8" y="104" width="4.8" height="4.8" fill="#e01010"/>
<text x="880.6" y="56.3" font-family="Liberation Sans, sans-serif" font-size="7" fill="#e8d820">z</text>
<text x="899.8" y="77" font-family="Liberation Sans, sans-serif" font-size="7" fill="#e8d820">x</text>
<text x="865.6" y="73" font-family="Liberation Sans, sans-serif" font-size="7" fill="#e8d820">y</text>
<g fill="none" stroke="#e8e8f2" stroke-width="0.8" stroke-linecap="round"><path d="M920 547V537.5"/><path d="M920 547L913.5 544.2"/><path d="M920 547L929 544.2"/></g>
<text x="918.2" y="536.4" font-family="Liberation Sans, sans-serif" font-size="6.6" fill="#ececf4">z</text>
<text x="909.2" y="546" font-family="Liberation Sans, sans-serif" font-size="6.6" fill="#ececf4">y</text>
<text x="929.6" y="546" font-family="Liberation Sans, sans-serif" font-size="6.6" fill="#ececf4">x</text>
<text transform="matrix(0.78 0.56 0 1 475.6 400)" font-family="Liberation Sans, sans-serif" font-weight="bold" font-size="14" fill="#a4a4cc" stroke="#000" stroke-width="0.8">Y1</text>
<text transform="matrix(0.78 0.56 0.95 -0.32 473.5 407)" font-family="Liberation Sans, sans-serif" font-weight="bold" font-size="13.5" fill="#b4b4dc" stroke="#000" stroke-width="0.8">Y1</text>
<text transform="matrix(0.78 0.56 0.95 -0.32 567.5 409.5)" font-family="Liberation Sans, sans-serif" font-weight="bold" font-size="13.5" fill="#b4b4dc" stroke="#000" stroke-width="0.8">Y2</text>
<clipPath id="cy2"><path d="M544.6 330L547.6 362H610V300H544Z"/></clipPath><g clip-path="url(#cy2)">
<text transform="matrix(0.92 -0.32 0 1 540 354.5)" font-family="Liberation Sans, sans-serif" font-weight="bold" font-size="14" fill="#dcdcee" stroke="#000" stroke-width="0.9">Y2</text>
</g>
<text transform="matrix(0.92 -0.32 -0.6 -0.42 545 366)" font-family="Liberation Sans, sans-serif" font-weight="bold" font-size="14.5" fill="#b4b4dc" stroke="#000" stroke-width="0.9">Y2</text>
</svg>
<svg class="ic" style="left:252px;top:29px" width="14" height="12" viewBox="0 0 14 12"><path d="M0 6.5h6.5M0 8.3h7.5M0 10.2h8" stroke="#3a9af4" stroke-width="1.3"/><path d="M0.2 7.4h6.8M0.2 9.2h7.6" stroke="#1c50d8" stroke-width="0.7"/><path d="M9.6 3.6L13 0.8" stroke="#10209c" stroke-width="2"/><path d="M5.2 5L8 8.8L11.6 5.6L9.4 2.6Z" fill="#f4f4f0" stroke="#222" stroke-width="0.6"/><path d="M7.4 4.4L9.8 7.4" stroke="#e8d020" stroke-width="1.6"/></svg>
<svg class="ic" style="left:268.5px;top:28.5px" width="13" height="12" viewBox="0 0 13 12"><circle cx="4.6" cy="7.8" r="3.8" fill="#f0b020"/><circle cx="4.9" cy="7.3" r="3" fill="#f8d030"/><path d="M1.2 9.6A3.8 3.8 0 0 0 6.6 11" stroke="#d030d0" stroke-width="0.9" fill="none"/><path d="M8 3.2L11.4 6.8" stroke="#2040c0" stroke-width="1.5"/><path d="M7.4 2.6L10.2 0.6L11 1.6" stroke="#f09030" stroke-width="1.1" fill="none"/></svg>
<svg class="ic" style="left:351px;top:29px" width="12" height="12" viewBox="0 0 12 12"><path d="M1 1.4L4 0.6L6.4 1.6L6 5L3.4 5.8L0.8 4.6Z" fill="#20a030" stroke="#222" stroke-width="0.5"/><path d="M3.6 2.4L6.3 1.7L6 5L3.4 5.8Z" fill="#e02020"/><path d="M8.6 2l1.4 0.4M9 3.4l1.4 0.4" stroke="#203080" stroke-width="0.8"/><path d="M5 9.2Q6.2 5.8 10.4 6.2L11.2 7.4V11.2H5.8Z" fill="#303038"/><path d="M5.4 9.4Q6.8 6.6 9.8 6.8L7.2 10.6Z" fill="#30c040"/><path d="M9.8 6.8L10.6 8.2L8.2 10.8L7.2 10.6Z" fill="#e03030"/></svg>
<svg class="ic" style="left:379px;top:29px" width="13" height="12" viewBox="0 0 13 12"><circle cx="2.6" cy="2.6" r="1.5" fill="#2aa8b8"/><path d="M2 2l1.6-1.4l0.8 2z" fill="#28b030"/><circle cx="3.5" cy="3.3" r="0.8" fill="#e02828"/><circle cx="9" cy="2.8" r="1.5" fill="#2aa8b8"/><path d="M8.4 2.2l1.6-1.4l0.8 2z" fill="#28b030"/><circle cx="9.9" cy="3.5" r="0.8" fill="#e02828"/><circle cx="2.6" cy="8.6" r="1.5" fill="#2aa8b8"/><path d="M2 8l1.6-1.4l0.8 2z" fill="#28b030"/><circle cx="3.5" cy="9.3" r="0.8" fill="#e02828"/><circle cx="9" cy="8.8" r="1.5" fill="#2aa8b8"/><path d="M8.4 8.2l1.6-1.4l0.8 2z" fill="#28b030"/><circle cx="9.9" cy="9.5" r="0.8" fill="#e02828"/><path d="M1 5h4M7.4 5.2h4M1 11h4M7.4 11.2h4" stroke="#3060c0" stroke-width="0.5"/></svg>
<svg class="ic" style="left:394.5px;top:29px" width="12.5" height="12" viewBox="0 0 12.5 12"><ellipse cx="4.6" cy="4.6" rx="4" ry="3.6" fill="#3ab0d0" stroke="#182850" stroke-width="0.7"/><ellipse cx="3.8" cy="3.8" rx="1.8" ry="1.6" fill="#d8f0f8"/><path d="M4 8.6L9 10.6L11.4 9.6V7.4L8 6.4" fill="#1890a8" stroke="#102040" stroke-width="0.6"/><path d="M4.6 2l5.6 4.4M9.8 1.6L5.4 6.4" stroke="#e82020" stroke-width="1.2"/><path d="M2.6 6.6l2.2 2.6L9.8 3" stroke="#10c020" stroke-width="1.4" fill="none"/></svg>
<svg class="ic" style="left:410.5px;top:29px" width="12.5" height="12" viewBox="0 0 12.5 12"><ellipse cx="4.6" cy="4.6" rx="4" ry="3.6" fill="#3ab0d0" stroke="#182850" stroke-width="0.7"/><ellipse cx="3.8" cy="3.8" rx="1.8" ry="1.6" fill="#d8f0f8"/><path d="M4 8.6L9 10.6L11.4 9.6V7.4L8 6.4" fill="#1890a8" stroke="#102040" stroke-width="0.6"/><path d="M7.6 1l0.9 2.2l2.4 0.2l-1.8 1.5l0.6 2.3l-2.1-1.3l-2.1 1.3l0.6-2.3l-1.8-1.5l2.4-0.2z" fill="#f8d820" stroke="#b07800" stroke-width="0.3"/></svg>
<svg class="ic" style="left:426.5px;top:29px" width="13" height="12" viewBox="0 0 13 12"><ellipse cx="4.6" cy="4.6" rx="4" ry="3.6" fill="#3ab0d0" stroke="#182850" stroke-width="0.7"/><ellipse cx="3.8" cy="3.8" rx="1.8" ry="1.6" fill="#d8f0f8"/><path d="M4 8.6L9 10.6L11.4 9.6V7.4L8 6.4" fill="#1890a8" stroke="#102040" stroke-width="0.6"/><path d="M8 0.6l0.9 2.2l2.4 0.2l-1.8 1.5l0.6 2.3l-2.1-1.3l-2.1 1.3l0.6-2.3l-1.8-1.5l2.4-0.2z" fill="#f8d820" stroke="#b07800" stroke-width="0.3"/><path d="M2.6 7.6l1 1.6l1.8 0.2l-1.4 1.2l0.4 1.4l-1.8-1l-1.4 1l0.4-1.6l-1.2-1l1.6-0.2z" fill="#f09018"/><path d="M4.4 5.6l2.4 2" stroke="#e02020" stroke-width="0.9"/></svg>
<svg class="ic" style="left:443.5px;top:29px" width="12" height="12" viewBox="0 0 12 12"><rect x="0.8" y="1.6" width="1.6" height="1.6" fill="#f0a020"/><rect x="0.8" y="5.6" width="1.6" height="1.6" fill="#f0a020"/><path d="M1.6 10.8L6.6 4.6" stroke="#c01818" stroke-width="1.6"/><path d="M4.4 1.6h5.4" stroke="#1828a0" stroke-width="1.8"/><path d="M7.4 2v3" stroke="#40b0e0" stroke-width="1.1"/><path d="M7.6 5v6" stroke="#e8d020" stroke-width="1.2"/></svg>
<svg class="ic" style="left:470px;top:29px" width="13" height="12" viewBox="0 0 13 12"><rect x="5.4" y="0.6" width="5.6" height="11" fill="#181818"/><path d="M6.9 1.6h2.6M6.9 4.2h2.6M6.9 6.8h2.6M6.9 9.4h2.6" stroke="#e8c828" stroke-width="1.5"/><path d="M1 4.6h5.6l-0.8 6h-4z" fill="#2848e0" stroke="#102080" stroke-width="0.5"/><ellipse cx="3.8" cy="4.6" rx="2.8" ry="1" fill="#6090ff"/></svg>
<svg class="ic" style="left:485.5px;top:29px" width="12.5" height="12" viewBox="0 0 12.5 12"><rect x="0.6" y="0.6" width="5.6" height="11" fill="#181818"/><path d="M2.1 1.6h2.6M2.1 4.2h2.6M2.1 6.8h2.6M2.1 9.4h2.6" stroke="#e8c828" stroke-width="1.5"/><circle cx="8.8" cy="8.4" r="3" fill="#e81818"/><path d="M7.4 7l2.8 2.8M10.2 7L7.4 9.8" stroke="#fff" stroke-width="0.9"/></svg>
<svg class="ic" style="left:512px;top:29px" width="12.5" height="12" viewBox="0 0 12.5 12"><path d="M1.4 8.6h5.2M3.8 8.6V3.6M2.2 2.6h3.4v2.8h-3.4z" stroke="#e8d018" stroke-width="1.3" fill="#f4f0c0"/><path d="M1 9.4h6" stroke="#907000" stroke-width="0.7"/><path d="M6.2 2.2l2-0.8" stroke="#9090a0" stroke-width="0.6"/><path d="M11.2 11.2L7 7.6" stroke="#108020" stroke-width="1.2"/><path d="M6.6 9.8V7.2h2.8" stroke="#108020" stroke-width="1.1" fill="none"/></svg>
<svg class="ic" style="left:528.5px;top:29px" width="12.5" height="12" viewBox="0 0 12.5 12"><path d="M1.4 8.6h5.2M3.8 8.6V3.6M2.2 2.6h3.4v2.8h-3.4z" stroke="#e8d018" stroke-width="1.3" fill="#f4f0c0"/><path d="M1 9.4h6" stroke="#907000" stroke-width="0.7"/><path d="M6.2 2.2l2-0.8" stroke="#9090a0" stroke-width="0.6"/><path d="M6.4 7L10.6 10.6" stroke="#d01818" stroke-width="1.1"/><path d="M11 8.2v2.8H8.2" stroke="#d01818" stroke-width="1.1" fill="none"/></svg>
<svg class="ic" style="left:555.5px;top:29px" width="12.5" height="12" viewBox="0 0 12.5 12"><path d="M1 7.6h5M2.6 7.6V2h4.4" stroke="#e8d018" stroke-width="1.4" fill="none"/><path d="M0.6 8.6h6" stroke="#907000" stroke-width="0.7"/><path d="M6 6l5.4 5M11.4 6L6 11" stroke="#e01010" stroke-width="1.6"/></svg>
<svg class="ic" style="left:570.5px;top:29px" width="12.5" height="12" viewBox="0 0 12.5 12"><path d="M1.4 8.6h5.2M3.8 8.6V3.6M2.2 2.6h3.4v2.8h-3.4z" stroke="#e8d018" stroke-width="1.3" fill="#f4f0c0"/><path d="M1 9.4h6" stroke="#907000" stroke-width="0.7"/><path d="M6.2 2.2l2-0.8" stroke="#9090a0" stroke-width="0.6"/><path d="M4.2 4.4l7 6.6M11.2 4.6L4.2 11" stroke="#e01010" stroke-width="1.5"/></svg>
<svg class="ic" style="left:598.5px;top:29px" width="13" height="12" viewBox="0 0 13 12"><path d="M6.2 1.6H1.2L4 5L1.2 8.4H4.6" stroke="#182040" stroke-width="1.1" fill="none"/><path d="M5.4 4.6h7" stroke="#2040d0" stroke-width="1"/><path d="M7 3.2L5.4 4.6L7 6M10.8 3.2L12.4 4.6L10.8 6" stroke="#2040d0" stroke-width="0.9" fill="none"/><rect x="5.4" y="8" width="6.6" height="3.2" fill="#f0b8b0" stroke="#2060c0" stroke-width="0.7"/></svg>
<svg class="ic" style="left:614.5px;top:29px" width="12.5" height="12" viewBox="0 0 12.5 12"><path d="M1 1v10M4 1v3M8 1v3M11.4 1v10M4 9v2M8 9v2" stroke="#a8a8b8" stroke-width="0.8" stroke-dasharray="1.6 1"/><path d="M1.4 9.4Q1.6 4.6 6.2 4.6T11 9.4" stroke="#38b030" stroke-width="2.2" fill="none"/></svg><div class="hdl" style="top:49px"></div>
<div class="hdl" style="top:76px"></div>
<div class="hdl" style="top:101px"></div>
<div class="hdl" style="top:129px"></div>
<div class="hdl" style="top:170px"></div>
<div class="hdl" style="top:197px"></div>
<div class="hdl" style="top:222px"></div>
<div class="hdl" style="top:249px"></div>
<div class="hdl" style="top:306px"></div>
<div class="hdl" style="top:347px"></div>
<div class="hdl" style="top:374px"></div>
<div class="hdl" style="top:415px"></div>
<div class="hdl" style="top:440px"></div>
<div class="hdl" style="top:466px"></div>
<svg class="ic" style="left:943px;top:55px" width="15" height="14" viewBox="0 0 15 14"><path d="M1 9.5L10.5 4.5L12.5 8L3 13Z" fill="#2828a8" stroke="#101050" stroke-width="0.5"/><path d="M2 10.4L10.8 5.8" stroke="#f0f0ff" stroke-width="1.2"/><path d="M9 1h5l-1 3.4h-3z" fill="#d8d8e0" stroke="#404048" stroke-width="0.5"/><path d="M10.4 4.4h2.4l-0.6 2.4h-1.2z" fill="#505058"/></svg>
<svg class="ic" style="left:943px;top:82px" width="14" height="13" viewBox="0 0 14 13"><circle cx="5" cy="7" r="3.6" fill="#c8c8d0" stroke="#505058" stroke-width="1" stroke-dasharray="1.4 0.9"/><circle cx="5" cy="7" r="1.3" fill="#f0f0f4" stroke="#505058" stroke-width="0.5"/><path d="M7.2 2.4L12.2 7.4L9.8 7.6L10.8 10.4L9.4 10.8L8.4 8.2L6.8 9.6Z" fill="#f4e020" stroke="#605000" stroke-width="0.5"/></svg>
<svg class="ic" style="left:943px;top:109.5px" width="15" height="15" viewBox="0 0 15 15"><path d="M3.6 0.8L10.4 7.6L7.4 7.8L9 11.6L7.2 12.3L5.6 8.6L3.6 10.6Z" fill="#f89020" stroke="#fff" stroke-width="0.7"/><path d="M11 12h3l-1.5 1.8z" fill="#000"/></svg>
<svg class="ic" style="left:943px;top:134.5px" width="15" height="13" viewBox="0 0 15 13"><path d="M0.6 4l3.2-2.8M1.6 0.6l1.8 3.2" stroke="#e01818" stroke-width="0.9"/><ellipse cx="8" cy="9.4" rx="5.4" ry="2.8" fill="#f0f0f0" stroke="#111" stroke-width="0.8"/><path d="M5.6 6.4L7 1.6Q8 0.6 9 1.6L10.4 6.4Q8 8.2 5.6 6.4Z" fill="#fafafa" stroke="#111" stroke-width="0.8"/><path d="M4.4 9.8h2.4M9.4 10.2h2.4" stroke="#40a0c0" stroke-width="0.9"/></svg>
<svg class="ic" style="left:944px;top:151px" width="12" height="13.5" viewBox="0 0 12 13.5"><rect x="0.6" y="0.6" width="10" height="12" fill="#40d8e8" stroke="#206080" stroke-width="0.7"/><path d="M2.4 3.4h6.4M2.4 5.8h6.4M2.4 8.2h6.4M2.4 10.4h6.4" stroke="#801018" stroke-width="1.1"/></svg>
<svg class="ic" style="left:943px;top:177px" width="15" height="14" viewBox="0 0 15 14"><rect x="1.6" y="0.8" width="8.4" height="11" fill="#e8f8f8" stroke="#207080" stroke-width="0.7"/><path d="M3 3h2M3 5.4h2M3 7.8h2" stroke="#18a0b0" stroke-width="1.2"/><path d="M6 3h3M6 5.4h3" stroke="#30a030" stroke-width="1"/><path d="M5.4 8.4h4l0-1.6l3 2.8l-3 2.8l0-1.6h-4z" fill="#f0d020" stroke="#605000" stroke-width="0.5"/><path d="M11.4 11.6h3l-1.5 1.8z" fill="#000"/></svg>
<svg class="ic" style="left:943px;top:203.5px" width="15" height="13.5" viewBox="0 0 15 13.5"><rect x="2.4" y="0.8" width="3.6" height="3.6" fill="#f0e020" stroke="#605000" stroke-width="0.5"/><path d="M5 11.6L2 8.8M5 8.2V3.6M5 8.2L1.4 12M5 8.2L11.6 5.6M5 8.2l5 3" stroke="#111" stroke-width="0.8" fill="none"/><path d="M9.4 2.4l1.6 1.8M10.6 8l1.8 0.6" stroke="#2848d0" stroke-width="0.9"/></svg>
<svg class="ic" style="left:944px;top:229.5px" width="12.5" height="12.5" viewBox="0 0 12.5 12.5"><rect x="0.6" y="0.6" width="11" height="11" rx="0.8" fill="#f0e030" stroke="#111" stroke-width="0.9"/><rect x="2.8" y="0.8" width="6.4" height="4" fill="#181818"/><rect x="5.8" y="1.4" width="2" height="2.8" fill="#e8e8f0"/><rect x="2.4" y="6.8" width="7.2" height="4.4" fill="#181818"/><path d="M3.4 8.2h5.2M3.4 9.8h5.2" stroke="#f0e030" stroke-width="0.7"/></svg>
<svg class="ic" style="left:944px;top:254.5px" width="13" height="13" viewBox="0 0 13 13"><circle cx="6" cy="1.8" r="1.5" fill="#e01010"/><path d="M6 3v3" stroke="#600" stroke-width="0.8"/><path d="M1.6 9.4L4 6.6h4.4l2.4 2.8l-2.6 2.4h-4z" fill="#f0d820" stroke="#185818" stroke-width="0.6"/><path d="M1.6 9.4L4 6.6h4.4l2.4 2.8" fill="none" stroke="#28a028" stroke-width="1.2"/></svg>
<svg class="ic" style="left:943px;top:271px" width="15" height="13.5" viewBox="0 0 15 13.5"><circle cx="7.4" cy="1.8" r="1.5" fill="#e01010"/><path d="M7.4 3v3" stroke="#600" stroke-width="0.8"/><path d="M1 12.4Q1.4 6.6 7.4 6.6T13.8 12.4Z" fill="#f0d820" stroke="#605000" stroke-width="0.5"/><circle cx="2.4" cy="11" r="1" fill="#189018"/><circle cx="12.4" cy="11" r="1" fill="#189018"/><circle cx="7.4" cy="6.8" r="1" fill="#189018"/><path d="M2.4 11L7.4 6.8L12.4 11" stroke="#111" stroke-width="0.5" fill="none"/></svg>
<svg class="ic" style="left:943px;top:287px" width="15" height="13.5" viewBox="0 0 15 13.5"><circle cx="9" cy="1.8" r="1.5" fill="#e01010"/><path d="M9 3v3" stroke="#600" stroke-width="0.8"/><path d="M1 12.6V11L8 5.4H13.6V12.6Z" fill="#f0d820" stroke="#605000" stroke-width="0.4"/><path d="M1 11L8 5.4H13.6" stroke="#28a028" stroke-width="1.3" fill="none"/></svg>
<svg class="ic" style="left:943px;top:311.5px" width="15" height="13" viewBox="0 0 15 13"><rect x="1" y="5" width="6.4" height="6.4" fill="#d8d8e0" stroke="#505060" stroke-width="0.7"/><rect x="5" y="1.4" width="6.4" height="6.4" fill="#e8e8f0" stroke="#505060" stroke-width="0.7"/><circle cx="9.6" cy="4.6" r="1.1" fill="#e02020"/><circle cx="11.6" cy="8.6" r="1.1" fill="#2040e0"/><circle cx="8.4" cy="10.4" r="1.1" fill="#e02020"/></svg>
<svg class="ic" style="left:943px;top:328.5px" width="15" height="13" viewBox="0 0 15 13"><rect x="1.4" y="0.8" width="5.4" height="8" fill="#4878d0" stroke="#203880" stroke-width="0.6"/><path d="M2.6 3h3M2.6 5h3" stroke="#c8e0ff" stroke-width="0.8"/><path d="M6.8 4.4l3-2.4l2.6 2.6" stroke="#505060" stroke-width="0.8" fill="#e8e8f0"/><rect x="7.6" y="6.8" width="5.6" height="5.4" fill="#30c840" stroke="#106018" stroke-width="0.6"/></svg>
<svg class="ic" style="left:943px;top:354px" width="15" height="13" viewBox="0 0 15 13"><path d="M4.6 3.6L12.4 11.4" stroke="#181818" stroke-width="1.6"/><path d="M3 1l0.6 1.4M5.6 0.8L5.2 2.2M1 3.4l1.4 0.4M2.2 6l1-1" stroke="#e02020" stroke-width="0.8"/><circle cx="3.8" cy="3" r="0.8" fill="#fff"/></svg>
<svg class="ic" style="left:943px;top:380.5px" width="15" height="13" viewBox="0 0 15 13"><path d="M1.6 10.6Q3.4 3.8 11.6 2.6" stroke="#f08020" stroke-width="2.6" fill="none" stroke-dasharray="1.2 0.8"/><path d="M2.4 11.6Q4.4 5.4 12.2 4.2" stroke="#3050d0" stroke-width="1" fill="none"/><path d="M1 9.4Q2.8 2.6 11 1.4" stroke="#c01818" stroke-width="0.8" fill="none" stroke-dasharray="0.8 1.2"/></svg>
<svg class="ic" style="left:943px;top:396px" width="15" height="14" viewBox="0 0 15 14"><path d="M1.6 10.6Q3.4 3.8 11.6 2.6" stroke="#f08020" stroke-width="2.6" fill="none" stroke-dasharray="1.2 0.8"/><path d="M2.4 11.6Q4.4 5.4 12.2 4.2" stroke="#3050d0" stroke-width="1" fill="none"/><path d="M1 9.4Q2.8 2.6 11 1.4" stroke="#c01818" stroke-width="0.8" fill="none" stroke-dasharray="0.8 1.2"/><path d="M4.4 8.6l2.6 3.2L12.6 5" stroke="#18c028" stroke-width="2" fill="none"/></svg>
<svg class="ic" style="left:944px;top:421.5px" width="13" height="13.5" viewBox="0 0 13 13.5"><rect x="0.8" y="0.8" width="10.8" height="11.6" fill="#f4f0c0" stroke="#303038" stroke-width="0.8"/><path d="M2.2 3h2M2.2 5.6h2M2.2 8.2h2M2.2 10.6h2M8.6 3h2M8.6 8.2h2" stroke="#404048" stroke-width="0.6"/><circle cx="6.4" cy="4" r="1.7" fill="#e81818"/><circle cx="6.4" cy="9" r="1.7" fill="#e81818"/></svg>
<svg class="ic" style="left:944px;top:446.5px" width="13" height="13.5" viewBox="0 0 13 13.5"><path d="M0.8 1h9.6l1.4 1.6v9.6H0.8z" fill="#e0e0e8" stroke="#404048" stroke-width="0.8"/><path d="M2.4 3.6h7.4M2.4 6h7.4M2.4 8.4h7.4M4.8 2.4v8M7.4 2.4v8" stroke="#303038" stroke-width="0.9"/></svg>
<svg class="ic" style="left:943px;top:471.5px" width="16" height="15" viewBox="0 0 16 15"><path d="M2 4h10M3 4V2.4h8V4M1.4 6.4h11.4M3.4 6.4v6M10.8 6.4v6M7 4v8.6M5.2 8.4v4M9 8.4v4" stroke="#a4a4b4" stroke-width="0.9" fill="none"/><path d="M12.4 12.4h3l-1.5 1.8z" fill="#000"/></svg>
<svg class="ic" style="left:928px;top:565px" width="32" height="22" viewBox="0 0 32 22"><path d="M9 2Q14 0.6 13.4 4Q12.6 6.6 9.6 6.4Q14 7.6 12.4 10.6Q10 14 5 13" stroke="#d01828" stroke-width="1.1" fill="none"/><path d="M6.4 5.6L3.4 13.4Q8.4 14 10 9.6Q10.6 6 6.4 5.6Z" stroke="#5030a0" stroke-width="1.1" fill="none"/><path d="M17.6 5.4Q13.4 4.6 12.8 7.4Q12.6 9.4 15 10Q17 10.6 16 12.4Q14.6 14 11.4 13" stroke="#f09020" stroke-width="1.4" fill="none"/><text x="5.6" y="19.6" font-family="Liberation Sans, sans-serif" font-size="5.6" font-weight="bold" font-style="italic" fill="#20208c" textLength="21" lengthAdjust="spacingAndGlyphs">CATIA</text></svg><svg class="ic" style="left:12px;top:570px" width="11" height="13" viewBox="0 0 11 13"><path d="M0.8 0.8h6.6l2.6 2.6v8.8H0.8z" fill="#fffcc8" stroke="#8a8a98" stroke-width="0.7"/><path d="M7.4 0.8v2.6h2.6" fill="#fff" stroke="#8a8a98" stroke-width="0.5"/></svg>
<svg class="ic" style="left:27px;top:570px" width="12" height="13" viewBox="0 0 12 13"><path d="M0.8 11V2.6h3.2l1 1.2h4.6V11z" fill="#e8a818" stroke="#806000" stroke-width="0.6"/><path d="M0.8 11L3 5.6h8.6L9.6 11z" fill="#f8d030" stroke="#806000" stroke-width="0.6"/><path d="M8 1.6q1.6-1 3 0.4" stroke="#404040" stroke-width="0.6" fill="none"/></svg>
<svg class="ic" style="left:43px;top:570px" width="11" height="13" viewBox="0 0 11 13"><rect x="0.6" y="0.8" width="9.8" height="10.6" rx="0.6" fill="#e8d828" stroke="#202000" stroke-width="0.9"/><rect x="2.4" y="1" width="6" height="4" fill="#b8d8f8" stroke="#202020" stroke-width="0.5"/><rect x="2.2" y="7" width="6.4" height="4.2" fill="#101010"/><rect x="6.2" y="8" width="1.6" height="2.4" fill="#e8e8e8"/></svg>
<svg class="ic" style="left:58px;top:570px" width="13" height="13" viewBox="0 0 13 13"><path d="M3.4 5L5.4 0.8h5L9 5z" fill="#f8f8ff" stroke="#3060c0" stroke-width="0.6"/><path d="M0.8 6.4L3 4.6h7.6l1.6 1.8v3.4H0.8z" fill="#b8b890" stroke="#404030" stroke-width="0.6"/><rect x="0.8" y="7.6" width="11.4" height="3.6" fill="#a0a060" stroke="#404030" stroke-width="0.6"/><path d="M2 9.4h5" stroke="#e8e020" stroke-width="0.9"/></svg>
<svg class="ic" style="left:76px;top:570px" width="10" height="13" viewBox="0 0 10 13"><path d="M1.6 0.8L6.4 8.4M7.8 0.8L3 8.4" stroke="#a8a8b8" stroke-width="1"/><circle cx="2.4" cy="10" r="1.6" fill="none" stroke="#a8a8b8" stroke-width="0.9"/><circle cx="7" cy="10" r="1.6" fill="none" stroke="#a8a8b8" stroke-width="0.9"/></svg>
<svg class="ic" style="left:90px;top:570px" width="13" height="13" viewBox="0 0 13 13"><path d="M0.8 1h5l1.6 1.6v6H0.8z" fill="#d4d4e4" stroke="#a8a8b8" stroke-width="0.8"/><path d="M4.8 4.4h5l1.6 1.6v6H4.8z" fill="#dcdcea" stroke="#a8a8b8" stroke-width="0.8"/></svg>
<svg class="ic" style="left:106px;top:570px" width="12" height="13" viewBox="0 0 12 13"><rect x="0.8" y="2" width="8" height="9" fill="#d0d0e0" stroke="#a8a8b8" stroke-width="0.8"/><rect x="3" y="0.8" width="3.6" height="2.2" fill="#c0c0d0" stroke="#a8a8b8" stroke-width="0.6"/><path d="M5.4 5.6h4l1.4 1.4v5H5.4z" fill="#e0e0ec" stroke="#a8a8b8" stroke-width="0.8"/></svg>
<svg class="ic" style="left:122px;top:570px" width="16" height="15" viewBox="0 0 16 15"><path d="M3.4 4.4Q7 1 10 3.8Q12 6.6 9.6 9.6L7.6 11.4" stroke="#28b060" stroke-width="2" fill="none"/><path d="M1 2.2L1.6 7.4L6.6 6z" fill="#2060d0" stroke="#103080" stroke-width="0.5"/><path d="M12 12.6h3l-1.5 1.8z" fill="#000"/></svg>
<svg class="ic" style="left:139px;top:570px" width="16" height="15" viewBox="0 0 16 15"><path d="M8.6 4.4Q5 1 2 3.8Q0.6 6.6 2.4 9.6L4.4 11.4" stroke="#a8a8b8" stroke-width="1.6" fill="none"/><path d="M11 2.2L10.4 7.4L5.4 6z" fill="#d0d0e0" stroke="#a8a8b8" stroke-width="0.6"/><path d="M12 12.6h3l-1.5 1.8z" fill="#000"/></svg>
<svg class="ic" style="left:156.5px;top:570px" width="13" height="13" viewBox="0 0 13 13"><path d="M0.8 0.8L5.8 5.6L3.8 5.8L5 8.4L3.8 9L2.6 6.4L0.8 7.8Z" fill="#f8e850" stroke="#202020" stroke-width="0.6"/><text x="5.2" y="11.6" font-family="Liberation Sans, sans-serif" font-weight="bold" font-size="12" fill="#1838b0">?</text></svg>
<svg class="ic" style="left:183px;top:570px" width="13" height="13" viewBox="0 0 13 13"><text x="0" y="10" font-family="Liberation Serif, serif" font-style="italic" font-weight="bold" font-size="11" fill="#111">f</text><text x="4.6" y="10.4" font-family="Liberation Sans, sans-serif" font-size="5.6" font-weight="bold" fill="#111">(x)</text></svg>
<svg class="ic" style="left:199px;top:570px" width="14" height="13" viewBox="0 0 14 13"><path d="M6.8 1Q12.6 1 12.6 5.2Q12.6 9 7.4 9.2L3.4 12.2L4.4 8.8Q1 7.8 1 5.2Q1 1 6.8 1Z" fill="#f4f4f4" stroke="#111" stroke-width="1.1"/><circle cx="5" cy="4.4" r="0.9" fill="#e03030"/><circle cx="8" cy="4" r="0.9" fill="#30a040"/><circle cx="7" cy="6.6" r="0.9" fill="#3050d0"/><circle cx="10" cy="6" r="0.8" fill="#e0a020"/></svg>
<svg class="ic" style="left:217px;top:570px" width="6" height="13" viewBox="0 0 6 13"><circle cx="2.8" cy="4" r="1.7" fill="none" stroke="#b8b8c8" stroke-width="0.9"/><circle cx="2.8" cy="8.4" r="1.7" fill="none" stroke="#b8b8c8" stroke-width="0.9"/></svg>
<svg class="ic" style="left:229px;top:570px" width="16" height="15" viewBox="0 0 16 15"><rect x="0.6" y="1.4" width="9.8" height="9.4" fill="#181850" stroke="#080830" stroke-width="0.6"/><rect x="0.6" y="1.4" width="9.8" height="2" fill="#3858d0"/><path d="M0.8 5.4h9.4M0.8 7.2h9.4M0.8 9h9.4M3.8 3.4v7.2M7 3.4v7.2" stroke="#8890c8" stroke-width="0.5"/><path d="M11.4 12.6h3l-1.5 1.8z" fill="#000"/></svg>
<svg class="ic" style="left:246.5px;top:570px" width="15" height="15" viewBox="0 0 15 15"><path d="M3 5.4V3.6Q3 0.8 5.6 0.8T8.2 3.6V5.4" stroke="#404048" stroke-width="1.3" fill="none"/><rect x="1.4" y="5.2" width="8.4" height="6.4" rx="0.8" fill="#55555f" stroke="#181820" stroke-width="0.7"/><rect x="3" y="6.6" width="2.4" height="2.4" fill="#d8d8e0"/><path d="M7 6.4v4" stroke="#a8a8b4" stroke-width="1"/><path d="M11 12.6h3l-1.5 1.8z" fill="#000"/></svg>
<svg class="ic" style="left:263px;top:570px" width="14" height="13" viewBox="0 0 14 13"><rect x="0.6" y="0.8" width="5" height="10.8" fill="#f0e8a0" stroke="#605820" stroke-width="0.5"/><rect x="1.2" y="1.6" width="3.8" height="2" fill="#3060d0"/><rect x="1.2" y="5" width="3.8" height="2" fill="#30a850"/><rect x="1.2" y="8.4" width="3.8" height="2" fill="#3060d0"/><path d="M6.8 1Q8.2 1 8.2 3T9.4 6.2Q8.2 6.4 8.2 8.6T6.8 11.2" stroke="#111" stroke-width="0.9" fill="none"/><path d="M10.4 5.4h2.6M10.4 7.2h2.6" stroke="#111" stroke-width="0.8"/></svg>
<svg class="ic" style="left:288.5px;top:570px" width="13" height="13" viewBox="0 0 13 13"><path d="M0.8 2.2L3 2L6 5.4L10.4 4Q12.4 3.8 12 5.2L7.6 7.6L8.4 11L7 11.4L5 8.6L2.2 9.6L1.4 8.4L3.8 6.6Z" fill="#2898e0" stroke="#0c4890" stroke-width="0.6"/></svg>
<svg class="ic" style="left:305px;top:570px" width="13" height="13" viewBox="0 0 13 13"><rect x="0.6" y="0.8" width="11.6" height="11" fill="#a8f0f0" stroke="#208088" stroke-width="0.6"/><rect x="4.4" y="4.2" width="4" height="4" fill="#f0e020" stroke="#504800" stroke-width="0.4"/><path d="M1.6 1.8L4 4M11.2 1.8L8.8 4M1.6 10.8L4 8.6M11.2 10.8L8.8 8.6" stroke="#111" stroke-width="1"/></svg>
<svg class="ic" style="left:321.5px;top:570px" width="13" height="13" viewBox="0 0 13 13"><path d="M6.2 0.6L8.4 3H7V5.4H9.6V4L12 6.2L9.6 8.4V7H7V9.6H8.4L6.2 12L4 9.6H5.4V7H2.8V8.4L0.4 6.2L2.8 4V5.4H5.4V3H4Z" fill="#1828a0" stroke="#080c50" stroke-width="0.4"/></svg>
<svg class="ic" style="left:337px;top:570px" width="14" height="13" viewBox="0 0 14 13"><path d="M2 5Q6.6 1.6 11.6 4.6" stroke="#2050c0" stroke-width="1.2" fill="none"/><path d="M10.4 2.6L12.4 5L9.6 5.6z" fill="#2050c0"/><path d="M1.4 7.4Q3.4 5.6 5.6 6.6L9.4 6.4Q10.6 6.8 9.6 7.8L7 8.2L9.6 8.8Q11 11.4 7 11.6Q3.4 11.8 1.4 9.8Z" fill="#f4c8c0" stroke="#503028" stroke-width="0.6"/></svg>
<svg class="ic" style="left:354px;top:570px" width="13" height="13" viewBox="0 0 13 13"><circle cx="4.6" cy="4.6" r="3.6" fill="#e8f4ff" stroke="#102060" stroke-width="1.1"/><path d="M7.4 7.4L11.6 11.6" stroke="#102060" stroke-width="1.8"/><path d="M2.8 4.6h3.6" stroke="#111" stroke-width="1"/><path d="M4.6 2.8v3.6" stroke="#111" stroke-width="1"/></svg>
<svg class="ic" style="left:370px;top:570px" width="13" height="13" viewBox="0 0 13 13"><circle cx="4.6" cy="4.6" r="3.6" fill="#e8f4ff" stroke="#102060" stroke-width="1.1"/><path d="M7.4 7.4L11.6 11.6" stroke="#102060" stroke-width="1.8"/><path d="M2.8 4.6h3.6" stroke="#111" stroke-width="1"/></svg>
<svg class="ic" style="left:385.5px;top:570px" width="13" height="13" viewBox="0 0 13 13"><path d="M0.6 9.6L6 7.4L12 9.4L6.4 12Z" fill="#78e0e8" stroke="#187078" stroke-width="0.6"/><path d="M6.2 9.4V2" stroke="#303038" stroke-width="0.9"/><path d="M4.6 3.6L6.2 0.8L7.8 3.6z" fill="#e8a020" stroke="#604000" stroke-width="0.4"/></svg>
<svg class="ic" style="left:401.5px;top:570px" width="12" height="13" viewBox="0 0 12 13"><rect x="0.6" y="0.8" width="10.8" height="10.8" fill="#1890e8" stroke="#0c4080" stroke-width="0.6"/><rect x="1.4" y="1.6" width="4.2" height="4.2" fill="#98f0f8"/><rect x="6.4" y="1.6" width="4.2" height="4.2" fill="#98f0f8"/><rect x="1.4" y="6.6" width="4.2" height="4.2" fill="#98f0f8"/><rect x="6.4" y="6.6" width="4.2" height="4.2" fill="#98f0f8"/></svg>
<svg class="ic" style="left:416.5px;top:570px" width="17" height="15" viewBox="0 0 17 15"><path d="M0.8 3.8L3.6 0.8H11.4V8.4L8.6 11.6H0.8Z" fill="#58c8f8" stroke="#0c3880" stroke-width="0.8"/><path d="M0.8 3.8H8.6V11.6M8.6 3.8L11.4 0.8" stroke="#0c3880" stroke-width="0.8" fill="none"/><rect x="1.4" y="4.4" width="6.6" height="6.6" fill="#a8ecff"/><path d="M13 12.6h3l-1.5 1.8z" fill="#000"/></svg>
<svg class="ic" style="left:434.5px;top:570px" width="16" height="15" viewBox="0 0 16 15"><rect x="0.8" y="1" width="9.6" height="10.6" rx="1.6" fill="#181818"/><ellipse cx="5.6" cy="3" rx="3.6" ry="1.4" fill="#f0e040"/><rect x="2" y="3" width="7.2" height="7" fill="#c8b020"/><ellipse cx="5.6" cy="10" rx="3.6" ry="1.2" fill="#a89010"/><rect x="4.6" y="4.4" width="2" height="5" fill="#48b8e0"/><path d="M12 12.6h3l-1.5 1.8z" fill="#000"/></svg>
<svg class="ic" style="left:451.5px;top:570px" width="12.5" height="13" viewBox="0 0 12.5 13"><rect x="0.6" y="0.8" width="11" height="11" fill="#90e8f0" stroke="#208088" stroke-width="0.6"/><path d="M2.4 9.4L6 5.6L9.6 3" stroke="#787880" stroke-width="1.6"/><rect x="6" y="2" width="3.6" height="2.6" fill="#f0e020" stroke="#504800" stroke-width="0.4"/><rect x="2" y="7.4" width="3" height="2.6" fill="#f4f4f4" stroke="#504800" stroke-width="0.4"/></svg>
<svg class="ic" style="left:467px;top:570px" width="13" height="13" viewBox="0 0 13 13"><rect x="0.6" y="0.8" width="11.6" height="11" fill="#90e8f0" stroke="#208088" stroke-width="0.6"/><path d="M3 8.8L6.4 6.4L9.6 4.6" stroke="#787880" stroke-width="1.5"/><rect x="2" y="7.2" width="3.4" height="2.6" fill="#f4f4f4" stroke="#504800" stroke-width="0.4"/><rect x="7.4" y="3" width="2.6" height="2.2" fill="#f0e020"/></svg>
<svg class="ic" style="left:493px;top:570px" width="14" height="13" viewBox="0 0 14 13"><path d="M1 3.4h11.6" stroke="#2040d0" stroke-width="1.1"/><path d="M3 1.4L1 3.4L3 5.4M10.6 1.4L12.6 3.4L10.6 5.4" stroke="#2040d0" stroke-width="1" fill="none"/><rect x="1" y="7.6" width="11.6" height="3.6" fill="#f0d8c0" stroke="#2050c0" stroke-width="0.7"/><path d="M3 9v2M5 9.6v1.4M7 9v2M9 9.6v1.4M11 9v2" stroke="#804020" stroke-width="0.5"/></svg>
<svg class="ic" style="left:511.5px;top:570px" width="12" height="13" viewBox="0 0 12 13"><rect x="2" y="1" width="7" height="9" fill="#484858" stroke="#181820" stroke-width="0.7"/><rect x="0.8" y="4" width="4" height="4.6" fill="#8890a8" stroke="#181820" stroke-width="0.5"/><path d="M6 3h2M6 5h2M6 7h2" stroke="#c0c8e0" stroke-width="0.7"/><path d="M8.6 9.6l1.6 2" stroke="#181820" stroke-width="1"/></svg>
<svg class="ic" style="left:536.5px;top:570px" width="13" height="13" viewBox="0 0 13 13"><path d="M0.8 4L3 2h5.4v5.4L6.2 9.6H0.8Z" fill="#3070d0" stroke="#0c2c70" stroke-width="0.6"/><path d="M5.4 6L7.4 4.2h4.4v4.6L9.8 10.8H5.4Z" fill="#4890e8" stroke="#0c2c70" stroke-width="0.6"/><rect x="8.6" y="2" width="2.6" height="2" fill="#f0d020"/><path d="M2 11h3" stroke="#909098" stroke-width="0.9"/></svg>
<svg class="ic" style="left:553.5px;top:570px" width="14" height="13" viewBox="0 0 14 13"><path d="M3 11.6h7.4M6.6 11.6V7.6M2 7.6h9.4M4 7.6Q3 4.6 5 3.2T6.6 0.8Q9.4 1 9 3.6T9.6 7.6" stroke="#111" stroke-width="1" fill="#e8e8ee"/><circle cx="10.4" cy="8.6" r="2.2" fill="#f0d020" stroke="#504000" stroke-width="0.5"/><path d="M9 8.6h2.8" stroke="#504000" stroke-width="0.6"/></svg>
</body></html>
